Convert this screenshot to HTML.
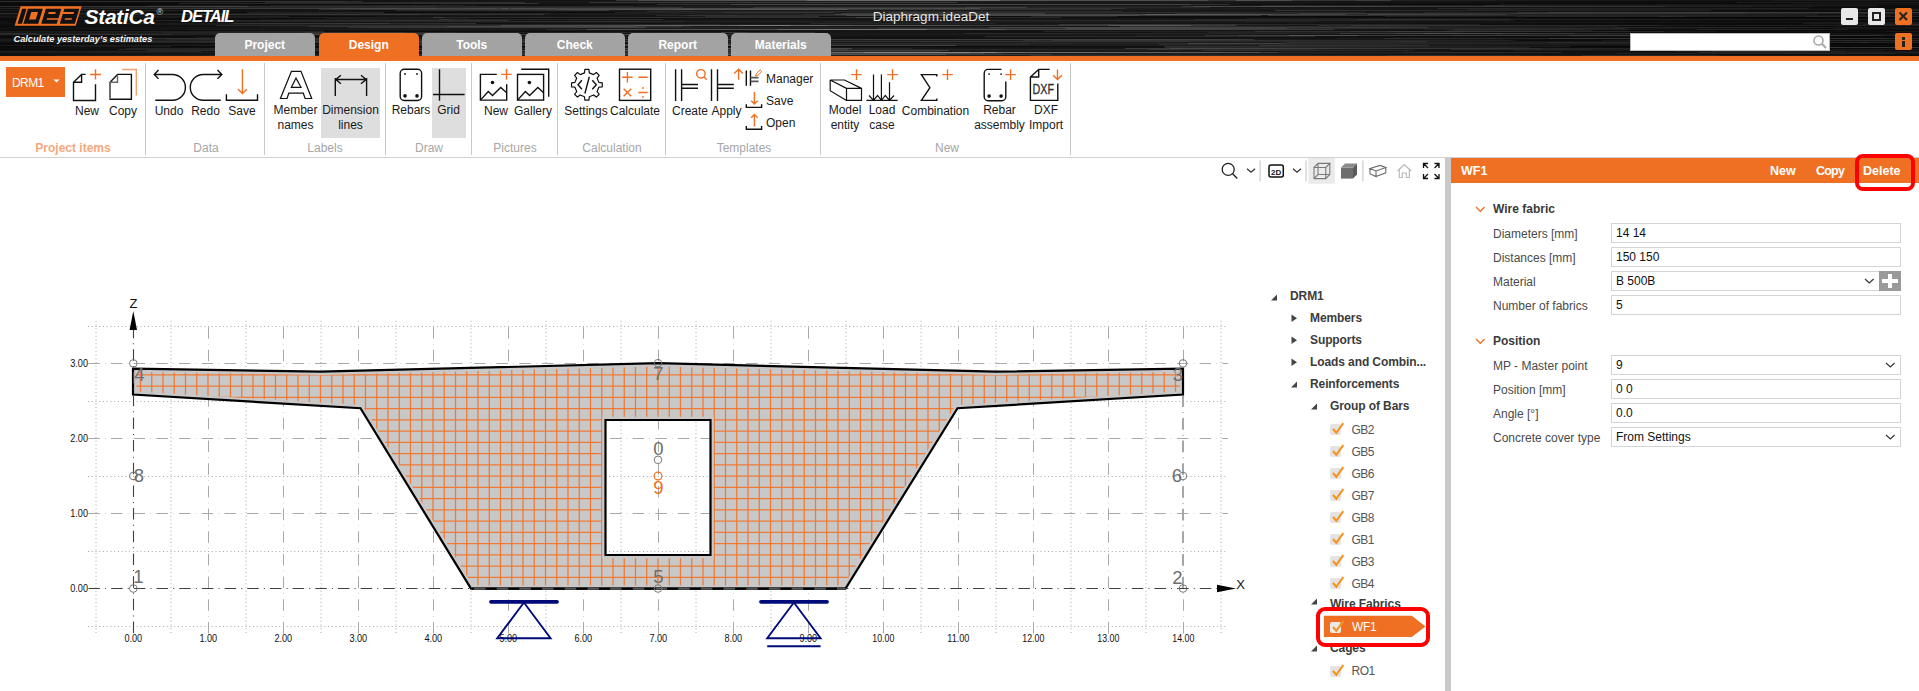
<!DOCTYPE html><html><head><meta charset="utf-8"><style>
*{margin:0;padding:0;box-sizing:border-box}
html,body{width:1919px;height:691px;overflow:hidden;background:#fff;font-family:"Liberation Sans", sans-serif;position:relative}
.a{position:absolute}
.t{position:absolute;white-space:nowrap;line-height:1;font-size:12px;color:#1a1a1a}
.c{transform:translateX(-50%)}
.gl{position:absolute;white-space:nowrap;line-height:1;font-size:12px;color:#a6a6a6;transform:translateX(-50%)}
.sep{position:absolute;top:63px;width:1px;height:92px;background:#c9c9c9}
.tab{position:absolute;top:33px;height:23px;width:99.5px;background:#a3a3a3;border-radius:5px 5px 0 0;color:#fff;font-weight:bold;font-size:12px;text-align:center;line-height:24px}
.lbl{position:absolute;left:1493px;font-size:12px;color:#4a4a4a;white-space:nowrap;line-height:1}
.inp{position:absolute;left:1611px;width:290px;height:19.5px;border:1px solid #d4d4d4;background:#fff;font-size:12px;color:#111;padding-left:4px;line-height:18px;white-space:nowrap}
.tr{position:absolute;font-size:12px;letter-spacing:-0.1px;font-weight:bold;color:#3c3c3c;white-space:nowrap;line-height:1}
.gb{position:absolute;margin-left:-0.5px;letter-spacing:-0.5px;font-size:12px;color:#555;white-space:nowrap;line-height:1}
</style></head><body>
<div class="a" style="left:0;top:0;width:1919px;height:56px;background:linear-gradient(to bottom,rgb(24,24,24) 0px, rgb(24,24,24) 1px,rgb(29,29,29) 1px, rgb(29,29,29) 2px,rgb(24,24,24) 2px, rgb(24,24,24) 3px,rgb(24,24,24) 3px, rgb(24,24,24) 4px,rgb(20,20,20) 4px, rgb(20,20,20) 5px,rgb(24,24,24) 5px, rgb(24,24,24) 6px,rgb(32,32,32) 6px, rgb(32,32,32) 7px,rgb(28,28,28) 7px, rgb(28,28,28) 8px,rgb(32,32,32) 8px, rgb(32,32,32) 9px,rgb(27,27,27) 9px, rgb(27,27,27) 10px,rgb(28,28,28) 10px, rgb(28,28,28) 11px,rgb(27,27,27) 11px, rgb(27,27,27) 12px,rgb(16,16,16) 12px, rgb(16,16,16) 13px,rgb(31,31,31) 13px, rgb(31,31,31) 14px,rgb(29,29,29) 14px, rgb(29,29,29) 15px,rgb(28,28,28) 15px, rgb(28,28,28) 16px,rgb(15,15,15) 16px, rgb(15,15,15) 17px,rgb(15,15,15) 17px, rgb(15,15,15) 18px,rgb(20,20,20) 18px, rgb(20,20,20) 19px,rgb(23,23,23) 19px, rgb(23,23,23) 20px,rgb(27,27,27) 20px, rgb(27,27,27) 21px,rgb(25,25,25) 21px, rgb(25,25,25) 22px,rgb(29,29,29) 22px, rgb(29,29,29) 23px,rgb(22,22,22) 23px, rgb(22,22,22) 24px,rgb(27,27,27) 24px, rgb(27,27,27) 25px,rgb(28,28,28) 25px, rgb(28,28,28) 26px,rgb(22,22,22) 26px, rgb(22,22,22) 27px,rgb(36,36,36) 27px, rgb(36,36,36) 28px,rgb(29,29,29) 28px, rgb(29,29,29) 29px,rgb(33,33,33) 29px, rgb(33,33,33) 30px,rgb(22,22,22) 30px, rgb(22,22,22) 31px,rgb(21,21,21) 31px, rgb(21,21,21) 32px,rgb(23,23,23) 32px, rgb(23,23,23) 33px,rgb(25,25,25) 33px, rgb(25,25,25) 34px,rgb(29,29,29) 34px, rgb(29,29,29) 35px,rgb(27,27,27) 35px, rgb(27,27,27) 36px,rgb(23,23,23) 36px, rgb(23,23,23) 37px,rgb(20,20,20) 37px, rgb(20,20,20) 38px,rgb(22,22,22) 38px, rgb(22,22,22) 39px,rgb(33,33,33) 39px, rgb(33,33,33) 40px,rgb(21,21,21) 40px, rgb(21,21,21) 41px,rgb(27,27,27) 41px, rgb(27,27,27) 42px,rgb(28,28,28) 42px, rgb(28,28,28) 43px,rgb(17,17,17) 43px, rgb(17,17,17) 44px,rgb(26,26,26) 44px, rgb(26,26,26) 45px,rgb(33,33,33) 45px, rgb(33,33,33) 46px,rgb(13,13,13) 46px, rgb(13,13,13) 47px,rgb(24,24,24) 47px, rgb(24,24,24) 48px,rgb(25,25,25) 48px, rgb(25,25,25) 49px,rgb(21,21,21) 49px, rgb(21,21,21) 50px,rgb(28,28,28) 50px, rgb(28,28,28) 51px,rgb(25,25,25) 51px, rgb(25,25,25) 52px,rgb(17,17,17) 52px, rgb(17,17,17) 53px,rgb(30,30,30) 53px, rgb(30,30,30) 54px,rgb(30,30,30) 54px, rgb(30,30,30) 55px,rgb(31,31,31) 55px, rgb(31,31,31) 56px)"></div>
<svg class="a" style="left:0;top:0" width="1919" height="56"><rect x="1820" y="2" width="128" height="1" fill="rgb(0,0,0)" fill-opacity="0.11"/><rect x="459" y="52" width="511" height="1" fill="rgb(255,255,255)" fill-opacity="0.11"/><rect x="-56" y="29" width="138" height="1" fill="rgb(0,0,0)" fill-opacity="0.07"/><rect x="-73" y="4" width="515" height="1" fill="rgb(0,0,0)" fill-opacity="0.12"/><rect x="736" y="52" width="524" height="1" fill="rgb(255,255,255)" fill-opacity="0.15"/><rect x="546" y="29" width="459" height="1" fill="rgb(255,255,255)" fill-opacity="0.10"/><rect x="72" y="18" width="234" height="1" fill="rgb(0,0,0)" fill-opacity="0.09"/><rect x="149" y="5" width="329" height="1" fill="rgb(255,255,255)" fill-opacity="0.07"/><rect x="1614" y="27" width="253" height="1" fill="rgb(255,255,255)" fill-opacity="0.09"/><rect x="1811" y="24" width="174" height="1" fill="rgb(255,255,255)" fill-opacity="0.06"/><rect x="-175" y="14" width="595" height="1" fill="rgb(255,255,255)" fill-opacity="0.06"/><rect x="680" y="9" width="309" height="1" fill="rgb(0,0,0)" fill-opacity="0.11"/><rect x="1604" y="44" width="669" height="1" fill="rgb(0,0,0)" fill-opacity="0.12"/><rect x="1689" y="29" width="564" height="1" fill="rgb(0,0,0)" fill-opacity="0.14"/><rect x="636" y="25" width="324" height="1" fill="rgb(255,255,255)" fill-opacity="0.10"/><rect x="-59" y="12" width="209" height="1" fill="rgb(255,255,255)" fill-opacity="0.06"/><rect x="15" y="3" width="431" height="1" fill="rgb(0,0,0)" fill-opacity="0.10"/><rect x="-146" y="39" width="622" height="1" fill="rgb(255,255,255)" fill-opacity="0.11"/><rect x="1806" y="16" width="453" height="1" fill="rgb(255,255,255)" fill-opacity="0.10"/><rect x="1886" y="31" width="369" height="1" fill="rgb(255,255,255)" fill-opacity="0.10"/><rect x="1374" y="6" width="539" height="1" fill="rgb(0,0,0)" fill-opacity="0.10"/><rect x="-151" y="33" width="670" height="1" fill="rgb(255,255,255)" fill-opacity="0.10"/><rect x="1720" y="34" width="550" height="1" fill="rgb(0,0,0)" fill-opacity="0.08"/><rect x="1262" y="5" width="242" height="1" fill="rgb(255,255,255)" fill-opacity="0.08"/><rect x="268" y="49" width="416" height="1" fill="rgb(0,0,0)" fill-opacity="0.10"/><rect x="1504" y="39" width="691" height="1" fill="rgb(0,0,0)" fill-opacity="0.14"/><rect x="641" y="52" width="578" height="1" fill="rgb(255,255,255)" fill-opacity="0.06"/><rect x="-139" y="46" width="97" height="1" fill="rgb(255,255,255)" fill-opacity="0.07"/><rect x="1071" y="44" width="293" height="1" fill="rgb(0,0,0)" fill-opacity="0.14"/><rect x="1806" y="22" width="306" height="1" fill="rgb(255,255,255)" fill-opacity="0.07"/><rect x="509" y="12" width="379" height="1" fill="rgb(0,0,0)" fill-opacity="0.16"/><rect x="807" y="0" width="485" height="1" fill="rgb(255,255,255)" fill-opacity="0.14"/><rect x="52" y="42" width="321" height="1" fill="rgb(255,255,255)" fill-opacity="0.13"/><rect x="711" y="11" width="474" height="1" fill="rgb(0,0,0)" fill-opacity="0.05"/><rect x="631" y="46" width="329" height="1" fill="rgb(0,0,0)" fill-opacity="0.15"/><rect x="1886" y="10" width="97" height="1" fill="rgb(255,255,255)" fill-opacity="0.11"/><rect x="107" y="41" width="592" height="1" fill="rgb(0,0,0)" fill-opacity="0.16"/><rect x="127" y="22" width="420" height="1" fill="rgb(0,0,0)" fill-opacity="0.04"/><rect x="1164" y="46" width="406" height="1" fill="rgb(255,255,255)" fill-opacity="0.15"/><rect x="209" y="55" width="622" height="1" fill="rgb(255,255,255)" fill-opacity="0.04"/><rect x="305" y="32" width="444" height="1" fill="rgb(255,255,255)" fill-opacity="0.07"/><rect x="-72" y="8" width="539" height="1" fill="rgb(0,0,0)" fill-opacity="0.15"/><rect x="1699" y="52" width="341" height="1" fill="rgb(255,255,255)" fill-opacity="0.15"/><rect x="119" y="34" width="397" height="1" fill="rgb(0,0,0)" fill-opacity="0.14"/><rect x="-192" y="38" width="575" height="1" fill="rgb(255,255,255)" fill-opacity="0.06"/><rect x="53" y="46" width="118" height="1" fill="rgb(255,255,255)" fill-opacity="0.12"/><rect x="1447" y="30" width="146" height="1" fill="rgb(255,255,255)" fill-opacity="0.11"/><rect x="-111" y="17" width="141" height="1" fill="rgb(255,255,255)" fill-opacity="0.09"/><rect x="731" y="4" width="460" height="1" fill="rgb(255,255,255)" fill-opacity="0.10"/><rect x="382" y="44" width="395" height="1" fill="rgb(255,255,255)" fill-opacity="0.14"/><rect x="1268" y="15" width="623" height="1" fill="rgb(255,255,255)" fill-opacity="0.15"/><rect x="1675" y="35" width="206" height="1" fill="rgb(255,255,255)" fill-opacity="0.09"/><rect x="728" y="25" width="125" height="1" fill="rgb(255,255,255)" fill-opacity="0.07"/><rect x="436" y="42" width="156" height="1" fill="rgb(0,0,0)" fill-opacity="0.13"/><rect x="1187" y="41" width="169" height="1" fill="rgb(0,0,0)" fill-opacity="0.15"/><rect x="1368" y="14" width="138" height="1" fill="rgb(255,255,255)" fill-opacity="0.15"/><rect x="1548" y="42" width="180" height="1" fill="rgb(255,255,255)" fill-opacity="0.09"/><rect x="685" y="21" width="301" height="1" fill="rgb(255,255,255)" fill-opacity="0.05"/><rect x="964" y="21" width="353" height="1" fill="rgb(255,255,255)" fill-opacity="0.04"/><rect x="420" y="39" width="676" height="1" fill="rgb(0,0,0)" fill-opacity="0.05"/><rect x="1841" y="14" width="145" height="1" fill="rgb(255,255,255)" fill-opacity="0.07"/><rect x="181" y="49" width="549" height="1" fill="rgb(0,0,0)" fill-opacity="0.14"/><rect x="1520" y="43" width="240" height="1" fill="rgb(0,0,0)" fill-opacity="0.06"/><rect x="839" y="36" width="283" height="1" fill="rgb(0,0,0)" fill-opacity="0.07"/><rect x="693" y="11" width="125" height="1" fill="rgb(0,0,0)" fill-opacity="0.15"/><rect x="347" y="51" width="457" height="1" fill="rgb(255,255,255)" fill-opacity="0.07"/><rect x="753" y="7" width="290" height="1" fill="rgb(0,0,0)" fill-opacity="0.11"/><rect x="1106" y="17" width="107" height="1" fill="rgb(0,0,0)" fill-opacity="0.13"/><rect x="350" y="10" width="192" height="1" fill="rgb(0,0,0)" fill-opacity="0.15"/><rect x="1395" y="33" width="260" height="1" fill="rgb(255,255,255)" fill-opacity="0.10"/><rect x="1488" y="22" width="697" height="1" fill="rgb(255,255,255)" fill-opacity="0.04"/><rect x="957" y="32" width="197" height="1" fill="rgb(0,0,0)" fill-opacity="0.10"/><rect x="1182" y="6" width="483" height="1" fill="rgb(255,255,255)" fill-opacity="0.12"/><rect x="1838" y="25" width="271" height="1" fill="rgb(255,255,255)" fill-opacity="0.07"/><rect x="1548" y="12" width="518" height="1" fill="rgb(255,255,255)" fill-opacity="0.12"/><rect x="1862" y="22" width="599" height="1" fill="rgb(0,0,0)" fill-opacity="0.04"/><rect x="705" y="16" width="114" height="1" fill="rgb(255,255,255)" fill-opacity="0.12"/><rect x="1208" y="32" width="255" height="1" fill="rgb(255,255,255)" fill-opacity="0.07"/><rect x="189" y="29" width="247" height="1" fill="rgb(255,255,255)" fill-opacity="0.04"/><rect x="1843" y="21" width="419" height="1" fill="rgb(0,0,0)" fill-opacity="0.07"/><rect x="258" y="19" width="193" height="1" fill="rgb(255,255,255)" fill-opacity="0.08"/><rect x="856" y="17" width="205" height="1" fill="rgb(255,255,255)" fill-opacity="0.10"/><rect x="1516" y="16" width="169" height="1" fill="rgb(255,255,255)" fill-opacity="0.11"/><rect x="439" y="19" width="224" height="1" fill="rgb(255,255,255)" fill-opacity="0.11"/><rect x="126" y="48" width="634" height="1" fill="rgb(255,255,255)" fill-opacity="0.13"/><rect x="485" y="48" width="691" height="1" fill="rgb(0,0,0)" fill-opacity="0.06"/><rect x="104" y="41" width="591" height="1" fill="rgb(255,255,255)" fill-opacity="0.13"/><rect x="1341" y="27" width="584" height="1" fill="rgb(255,255,255)" fill-opacity="0.06"/><rect x="994" y="32" width="584" height="1" fill="rgb(0,0,0)" fill-opacity="0.04"/><rect x="1675" y="51" width="503" height="1" fill="rgb(255,255,255)" fill-opacity="0.12"/><rect x="-112" y="1" width="475" height="1" fill="rgb(255,255,255)" fill-opacity="0.16"/><rect x="973" y="28" width="469" height="1" fill="rgb(0,0,0)" fill-opacity="0.12"/><rect x="354" y="31" width="363" height="1" fill="rgb(0,0,0)" fill-opacity="0.05"/><rect x="-7" y="34" width="406" height="1" fill="rgb(255,255,255)" fill-opacity="0.13"/><rect x="-44" y="51" width="245" height="1" fill="rgb(255,255,255)" fill-opacity="0.13"/><rect x="1165" y="47" width="365" height="1" fill="rgb(255,255,255)" fill-opacity="0.14"/><rect x="403" y="43" width="109" height="1" fill="rgb(255,255,255)" fill-opacity="0.12"/><rect x="110" y="38" width="237" height="1" fill="rgb(255,255,255)" fill-opacity="0.13"/><rect x="80" y="36" width="379" height="1" fill="rgb(0,0,0)" fill-opacity="0.10"/><rect x="1254" y="6" width="499" height="1" fill="rgb(255,255,255)" fill-opacity="0.07"/><rect x="778" y="29" width="556" height="1" fill="rgb(255,255,255)" fill-opacity="0.16"/><rect x="1854" y="19" width="660" height="1" fill="rgb(255,255,255)" fill-opacity="0.04"/><rect x="864" y="52" width="697" height="1" fill="rgb(255,255,255)" fill-opacity="0.16"/><rect x="-43" y="13" width="136" height="1" fill="rgb(255,255,255)" fill-opacity="0.13"/><rect x="78" y="23" width="589" height="1" fill="rgb(0,0,0)" fill-opacity="0.10"/><rect x="567" y="45" width="389" height="1" fill="rgb(255,255,255)" fill-opacity="0.15"/><rect x="-192" y="10" width="385" height="1" fill="rgb(255,255,255)" fill-opacity="0.09"/><rect x="674" y="9" width="313" height="1" fill="rgb(255,255,255)" fill-opacity="0.05"/><rect x="1377" y="20" width="600" height="1" fill="rgb(0,0,0)" fill-opacity="0.05"/><rect x="-175" y="45" width="539" height="1" fill="rgb(255,255,255)" fill-opacity="0.07"/><rect x="1897" y="24" width="445" height="1" fill="rgb(255,255,255)" fill-opacity="0.08"/><rect x="1594" y="17" width="254" height="1" fill="rgb(0,0,0)" fill-opacity="0.05"/><rect x="1765" y="40" width="235" height="1" fill="rgb(255,255,255)" fill-opacity="0.07"/><rect x="1424" y="12" width="567" height="1" fill="rgb(255,255,255)" fill-opacity="0.09"/><rect x="1125" y="48" width="646" height="1" fill="rgb(255,255,255)" fill-opacity="0.15"/><rect x="-31" y="46" width="659" height="1" fill="rgb(0,0,0)" fill-opacity="0.09"/><rect x="1153" y="8" width="257" height="1" fill="rgb(0,0,0)" fill-opacity="0.05"/><rect x="159" y="8" width="337" height="1" fill="rgb(255,255,255)" fill-opacity="0.07"/><rect x="1850" y="47" width="241" height="1" fill="rgb(255,255,255)" fill-opacity="0.12"/><rect x="1205" y="35" width="154" height="1" fill="rgb(255,255,255)" fill-opacity="0.12"/><rect x="1703" y="32" width="388" height="1" fill="rgb(0,0,0)" fill-opacity="0.07"/><rect x="745" y="48" width="167" height="1" fill="rgb(255,255,255)" fill-opacity="0.06"/><rect x="967" y="21" width="278" height="1" fill="rgb(0,0,0)" fill-opacity="0.08"/><rect x="1663" y="12" width="545" height="1" fill="rgb(255,255,255)" fill-opacity="0.09"/><rect x="241" y="33" width="248" height="1" fill="rgb(255,255,255)" fill-opacity="0.13"/><rect x="1832" y="36" width="158" height="1" fill="rgb(0,0,0)" fill-opacity="0.10"/><rect x="1582" y="55" width="137" height="1" fill="rgb(255,255,255)" fill-opacity="0.15"/><rect x="736" y="41" width="671" height="1" fill="rgb(0,0,0)" fill-opacity="0.14"/><rect x="67" y="1" width="344" height="1" fill="rgb(0,0,0)" fill-opacity="0.13"/><rect x="829" y="37" width="125" height="1" fill="rgb(0,0,0)" fill-opacity="0.15"/><rect x="1596" y="33" width="683" height="1" fill="rgb(255,255,255)" fill-opacity="0.07"/><rect x="119" y="9" width="683" height="1" fill="rgb(0,0,0)" fill-opacity="0.05"/><rect x="1159" y="44" width="554" height="1" fill="rgb(255,255,255)" fill-opacity="0.09"/><rect x="-197" y="2" width="158" height="1" fill="rgb(255,255,255)" fill-opacity="0.11"/><rect x="438" y="45" width="159" height="1" fill="rgb(0,0,0)" fill-opacity="0.07"/><rect x="1404" y="44" width="142" height="1" fill="rgb(0,0,0)" fill-opacity="0.08"/><rect x="615" y="12" width="219" height="1" fill="rgb(255,255,255)" fill-opacity="0.11"/><rect x="1892" y="19" width="253" height="1" fill="rgb(0,0,0)" fill-opacity="0.08"/><rect x="798" y="15" width="226" height="1" fill="rgb(0,0,0)" fill-opacity="0.07"/><rect x="1164" y="45" width="114" height="1" fill="rgb(0,0,0)" fill-opacity="0.06"/><rect x="682" y="41" width="239" height="1" fill="rgb(0,0,0)" fill-opacity="0.12"/><rect x="835" y="14" width="511" height="1" fill="rgb(255,255,255)" fill-opacity="0.13"/><rect x="216" y="25" width="574" height="1" fill="rgb(255,255,255)" fill-opacity="0.13"/><rect x="841" y="13" width="204" height="1" fill="rgb(255,255,255)" fill-opacity="0.13"/><rect x="265" y="29" width="551" height="1" fill="rgb(0,0,0)" fill-opacity="0.08"/><rect x="1081" y="31" width="636" height="1" fill="rgb(0,0,0)" fill-opacity="0.10"/><rect x="1792" y="3" width="171" height="1" fill="rgb(255,255,255)" fill-opacity="0.09"/><rect x="98" y="38" width="112" height="1" fill="rgb(255,255,255)" fill-opacity="0.05"/><rect x="1656" y="45" width="534" height="1" fill="rgb(0,0,0)" fill-opacity="0.16"/><rect x="200" y="21" width="485" height="1" fill="rgb(255,255,255)" fill-opacity="0.10"/><rect x="1195" y="19" width="315" height="1" fill="rgb(255,255,255)" fill-opacity="0.08"/><rect x="29" y="10" width="129" height="1" fill="rgb(255,255,255)" fill-opacity="0.05"/><rect x="978" y="7" width="550" height="1" fill="rgb(0,0,0)" fill-opacity="0.09"/><rect x="1526" y="19" width="348" height="1" fill="rgb(255,255,255)" fill-opacity="0.05"/><rect x="937" y="23" width="357" height="1" fill="rgb(0,0,0)" fill-opacity="0.08"/><rect x="-136" y="30" width="335" height="1" fill="rgb(0,0,0)" fill-opacity="0.14"/><rect x="589" y="2" width="368" height="1" fill="rgb(255,255,255)" fill-opacity="0.14"/><rect x="1369" y="12" width="637" height="1" fill="rgb(255,255,255)" fill-opacity="0.08"/><rect x="-108" y="39" width="543" height="1" fill="rgb(0,0,0)" fill-opacity="0.12"/><rect x="-192" y="19" width="549" height="1" fill="rgb(0,0,0)" fill-opacity="0.15"/><rect x="-149" y="4" width="225" height="1" fill="rgb(0,0,0)" fill-opacity="0.10"/><rect x="612" y="49" width="236" height="1" fill="rgb(255,255,255)" fill-opacity="0.09"/><rect x="184" y="31" width="578" height="1" fill="rgb(0,0,0)" fill-opacity="0.13"/><rect x="118" y="49" width="226" height="1" fill="rgb(255,255,255)" fill-opacity="0.14"/><rect x="1443" y="50" width="129" height="1" fill="rgb(0,0,0)" fill-opacity="0.06"/><rect x="656" y="15" width="483" height="1" fill="rgb(255,255,255)" fill-opacity="0.10"/><rect x="1859" y="10" width="628" height="1" fill="rgb(255,255,255)" fill-opacity="0.16"/><rect x="238" y="5" width="341" height="1" fill="rgb(0,0,0)" fill-opacity="0.16"/><rect x="292" y="11" width="338" height="1" fill="rgb(0,0,0)" fill-opacity="0.11"/><rect x="931" y="47" width="560" height="1" fill="rgb(0,0,0)" fill-opacity="0.13"/><rect x="417" y="18" width="431" height="1" fill="rgb(0,0,0)" fill-opacity="0.08"/><rect x="723" y="12" width="195" height="1" fill="rgb(255,255,255)" fill-opacity="0.07"/><rect x="195" y="37" width="120" height="1" fill="rgb(255,255,255)" fill-opacity="0.07"/><rect x="286" y="33" width="581" height="1" fill="rgb(0,0,0)" fill-opacity="0.12"/><rect x="-191" y="6" width="627" height="1" fill="rgb(255,255,255)" fill-opacity="0.07"/><rect x="-115" y="23" width="262" height="1" fill="rgb(255,255,255)" fill-opacity="0.05"/><rect x="1025" y="52" width="657" height="1" fill="rgb(0,0,0)" fill-opacity="0.08"/><rect x="1066" y="28" width="560" height="1" fill="rgb(255,255,255)" fill-opacity="0.12"/><rect x="1052" y="40" width="464" height="1" fill="rgb(255,255,255)" fill-opacity="0.07"/><rect x="-107" y="9" width="700" height="1" fill="rgb(0,0,0)" fill-opacity="0.04"/><rect x="1511" y="13" width="588" height="1" fill="rgb(255,255,255)" fill-opacity="0.09"/><rect x="456" y="39" width="206" height="1" fill="rgb(255,255,255)" fill-opacity="0.14"/><rect x="657" y="4" width="573" height="1" fill="rgb(255,255,255)" fill-opacity="0.12"/><rect x="-9" y="34" width="181" height="1" fill="rgb(255,255,255)" fill-opacity="0.12"/><rect x="1202" y="18" width="339" height="1" fill="rgb(0,0,0)" fill-opacity="0.05"/><rect x="670" y="22" width="91" height="1" fill="rgb(0,0,0)" fill-opacity="0.13"/><rect x="214" y="41" width="531" height="1" fill="rgb(255,255,255)" fill-opacity="0.06"/><rect x="690" y="10" width="589" height="1" fill="rgb(0,0,0)" fill-opacity="0.09"/><rect x="1423" y="29" width="161" height="1" fill="rgb(255,255,255)" fill-opacity="0.05"/><rect x="1711" y="51" width="135" height="1" fill="rgb(255,255,255)" fill-opacity="0.11"/><rect x="161" y="32" width="296" height="1" fill="rgb(255,255,255)" fill-opacity="0.06"/><rect x="28" y="4" width="384" height="1" fill="rgb(0,0,0)" fill-opacity="0.14"/><rect x="433" y="12" width="599" height="1" fill="rgb(0,0,0)" fill-opacity="0.05"/><rect x="-88" y="20" width="654" height="1" fill="rgb(0,0,0)" fill-opacity="0.09"/><rect x="1245" y="39" width="633" height="1" fill="rgb(0,0,0)" fill-opacity="0.12"/><rect x="649" y="39" width="605" height="1" fill="rgb(255,255,255)" fill-opacity="0.14"/><rect x="-112" y="13" width="662" height="1" fill="rgb(255,255,255)" fill-opacity="0.06"/><rect x="319" y="9" width="529" height="1" fill="rgb(255,255,255)" fill-opacity="0.15"/><rect x="1569" y="35" width="497" height="1" fill="rgb(255,255,255)" fill-opacity="0.12"/><rect x="1059" y="24" width="421" height="1" fill="rgb(255,255,255)" fill-opacity="0.12"/><rect x="447" y="26" width="235" height="1" fill="rgb(255,255,255)" fill-opacity="0.09"/><rect x="721" y="32" width="94" height="1" fill="rgb(255,255,255)" fill-opacity="0.11"/><rect x="738" y="15" width="464" height="1" fill="rgb(0,0,0)" fill-opacity="0.14"/><rect x="794" y="51" width="146" height="1" fill="rgb(255,255,255)" fill-opacity="0.06"/><rect x="1485" y="5" width="393" height="1" fill="rgb(255,255,255)" fill-opacity="0.12"/><rect x="-27" y="8" width="535" height="1" fill="rgb(255,255,255)" fill-opacity="0.13"/><rect x="1379" y="3" width="635" height="1" fill="rgb(0,0,0)" fill-opacity="0.12"/><rect x="1600" y="1" width="698" height="1" fill="rgb(0,0,0)" fill-opacity="0.13"/><rect x="76" y="12" width="629" height="1" fill="rgb(0,0,0)" fill-opacity="0.07"/><rect x="147" y="50" width="569" height="1" fill="rgb(255,255,255)" fill-opacity="0.15"/><rect x="1082" y="22" width="236" height="1" fill="rgb(0,0,0)" fill-opacity="0.08"/><rect x="758" y="52" width="238" height="1" fill="rgb(255,255,255)" fill-opacity="0.16"/><rect x="352" y="37" width="394" height="1" fill="rgb(255,255,255)" fill-opacity="0.08"/><rect x="647" y="11" width="475" height="1" fill="rgb(255,255,255)" fill-opacity="0.07"/><rect x="154" y="24" width="567" height="1" fill="rgb(255,255,255)" fill-opacity="0.05"/><rect x="1602" y="40" width="679" height="1" fill="rgb(255,255,255)" fill-opacity="0.09"/><rect x="1653" y="44" width="145" height="1" fill="rgb(0,0,0)" fill-opacity="0.16"/><rect x="1350" y="25" width="310" height="1" fill="rgb(255,255,255)" fill-opacity="0.09"/><rect x="557" y="9" width="554" height="1" fill="rgb(255,255,255)" fill-opacity="0.09"/><rect x="1812" y="47" width="264" height="1" fill="rgb(255,255,255)" fill-opacity="0.10"/><rect x="1030" y="55" width="491" height="1" fill="rgb(255,255,255)" fill-opacity="0.08"/><rect x="265" y="2" width="260" height="1" fill="rgb(255,255,255)" fill-opacity="0.12"/><rect x="1681" y="23" width="162" height="1" fill="rgb(0,0,0)" fill-opacity="0.07"/><rect x="-86" y="1" width="432" height="1" fill="rgb(255,255,255)" fill-opacity="0.08"/><rect x="271" y="34" width="442" height="1" fill="rgb(255,255,255)" fill-opacity="0.11"/><rect x="1540" y="39" width="178" height="1" fill="rgb(0,0,0)" fill-opacity="0.04"/><rect x="114" y="45" width="139" height="1" fill="rgb(0,0,0)" fill-opacity="0.12"/><rect x="366" y="50" width="583" height="1" fill="rgb(255,255,255)" fill-opacity="0.16"/><rect x="981" y="52" width="297" height="1" fill="rgb(255,255,255)" fill-opacity="0.12"/><rect x="1340" y="33" width="234" height="1" fill="rgb(255,255,255)" fill-opacity="0.15"/><rect x="-147" y="34" width="195" height="1" fill="rgb(0,0,0)" fill-opacity="0.06"/><rect x="-174" y="6" width="422" height="1" fill="rgb(255,255,255)" fill-opacity="0.15"/><rect x="888" y="12" width="478" height="1" fill="rgb(255,255,255)" fill-opacity="0.12"/><rect x="167" y="39" width="272" height="1" fill="rgb(255,255,255)" fill-opacity="0.08"/><rect x="1444" y="46" width="524" height="1" fill="rgb(0,0,0)" fill-opacity="0.04"/><rect x="1716" y="47" width="130" height="1" fill="rgb(255,255,255)" fill-opacity="0.12"/><rect x="349" y="6" width="479" height="1" fill="rgb(0,0,0)" fill-opacity="0.05"/><rect x="1780" y="44" width="243" height="1" fill="rgb(0,0,0)" fill-opacity="0.05"/><rect x="716" y="43" width="569" height="1" fill="rgb(255,255,255)" fill-opacity="0.10"/><rect x="1750" y="41" width="634" height="1" fill="rgb(255,255,255)" fill-opacity="0.05"/><rect x="347" y="10" width="226" height="1" fill="rgb(0,0,0)" fill-opacity="0.13"/><rect x="1721" y="47" width="199" height="1" fill="rgb(0,0,0)" fill-opacity="0.09"/><rect x="1706" y="24" width="471" height="1" fill="rgb(0,0,0)" fill-opacity="0.12"/><rect x="786" y="34" width="601" height="1" fill="rgb(0,0,0)" fill-opacity="0.12"/><rect x="1807" y="27" width="225" height="1" fill="rgb(0,0,0)" fill-opacity="0.15"/><rect x="1108" y="25" width="128" height="1" fill="rgb(255,255,255)" fill-opacity="0.15"/><rect x="35" y="1" width="466" height="1" fill="rgb(0,0,0)" fill-opacity="0.06"/><rect x="-140" y="44" width="106" height="1" fill="rgb(0,0,0)" fill-opacity="0.12"/><rect x="-58" y="44" width="109" height="1" fill="rgb(0,0,0)" fill-opacity="0.14"/><rect x="1517" y="12" width="588" height="1" fill="rgb(255,255,255)" fill-opacity="0.15"/><rect x="1387" y="55" width="521" height="1" fill="rgb(255,255,255)" fill-opacity="0.09"/><rect x="35" y="13" width="101" height="1" fill="rgb(0,0,0)" fill-opacity="0.14"/><rect x="-16" y="40" width="546" height="1" fill="rgb(255,255,255)" fill-opacity="0.12"/><rect x="6" y="8" width="550" height="1" fill="rgb(255,255,255)" fill-opacity="0.06"/><rect x="348" y="27" width="298" height="1" fill="rgb(255,255,255)" fill-opacity="0.15"/><rect x="573" y="48" width="279" height="1" fill="rgb(255,255,255)" fill-opacity="0.16"/><rect x="404" y="54" width="542" height="1" fill="rgb(255,255,255)" fill-opacity="0.13"/><rect x="1423" y="33" width="295" height="1" fill="rgb(255,255,255)" fill-opacity="0.12"/><rect x="1300" y="13" width="593" height="1" fill="rgb(255,255,255)" fill-opacity="0.11"/><rect x="-197" y="27" width="205" height="1" fill="rgb(0,0,0)" fill-opacity="0.13"/><rect x="530" y="0" width="139" height="1" fill="rgb(0,0,0)" fill-opacity="0.12"/><rect x="1044" y="31" width="673" height="1" fill="rgb(255,255,255)" fill-opacity="0.10"/><rect x="396" y="10" width="213" height="1" fill="rgb(255,255,255)" fill-opacity="0.12"/><rect x="1771" y="7" width="555" height="1" fill="rgb(0,0,0)" fill-opacity="0.10"/><rect x="1453" y="35" width="469" height="1" fill="rgb(255,255,255)" fill-opacity="0.08"/><rect x="1673" y="25" width="542" height="1" fill="rgb(0,0,0)" fill-opacity="0.09"/><rect x="233" y="23" width="243" height="1" fill="rgb(255,255,255)" fill-opacity="0.15"/><rect x="1863" y="24" width="471" height="1" fill="rgb(255,255,255)" fill-opacity="0.15"/><rect x="1384" y="38" width="547" height="1" fill="rgb(255,255,255)" fill-opacity="0.12"/><rect x="896" y="20" width="618" height="1" fill="rgb(255,255,255)" fill-opacity="0.09"/><rect x="156" y="20" width="352" height="1" fill="rgb(255,255,255)" fill-opacity="0.13"/><rect x="502" y="8" width="478" height="1" fill="rgb(255,255,255)" fill-opacity="0.12"/><rect x="433" y="17" width="516" height="1" fill="rgb(255,255,255)" fill-opacity="0.14"/><rect x="1847" y="9" width="528" height="1" fill="rgb(255,255,255)" fill-opacity="0.11"/><rect x="489" y="15" width="197" height="1" fill="rgb(0,0,0)" fill-opacity="0.16"/><rect x="146" y="6" width="488" height="1" fill="rgb(255,255,255)" fill-opacity="0.06"/><rect x="1469" y="9" width="535" height="1" fill="rgb(255,255,255)" fill-opacity="0.09"/><rect x="1714" y="40" width="254" height="1" fill="rgb(255,255,255)" fill-opacity="0.15"/><rect x="638" y="0" width="570" height="1" fill="rgb(255,255,255)" fill-opacity="0.12"/><rect x="422" y="40" width="94" height="1" fill="rgb(0,0,0)" fill-opacity="0.07"/><rect x="1356" y="0" width="643" height="1" fill="rgb(255,255,255)" fill-opacity="0.09"/><rect x="1159" y="47" width="605" height="1" fill="rgb(0,0,0)" fill-opacity="0.12"/><rect x="1148" y="49" width="442" height="1" fill="rgb(255,255,255)" fill-opacity="0.07"/><rect x="753" y="7" width="274" height="1" fill="rgb(255,255,255)" fill-opacity="0.12"/><rect x="309" y="26" width="328" height="1" fill="rgb(255,255,255)" fill-opacity="0.13"/><rect x="690" y="54" width="362" height="1" fill="rgb(255,255,255)" fill-opacity="0.11"/><rect x="1188" y="43" width="621" height="1" fill="rgb(255,255,255)" fill-opacity="0.15"/><rect x="616" y="0" width="384" height="1" fill="rgb(255,255,255)" fill-opacity="0.16"/><rect x="258" y="34" width="524" height="1" fill="rgb(255,255,255)" fill-opacity="0.15"/><rect x="12" y="22" width="436" height="1" fill="rgb(0,0,0)" fill-opacity="0.10"/><rect x="-166" y="32" width="571" height="1" fill="rgb(255,255,255)" fill-opacity="0.08"/><rect x="1791" y="47" width="210" height="1" fill="rgb(255,255,255)" fill-opacity="0.12"/><rect x="1759" y="48" width="532" height="1" fill="rgb(0,0,0)" fill-opacity="0.11"/><rect x="376" y="16" width="328" height="1" fill="rgb(255,255,255)" fill-opacity="0.04"/><rect x="1120" y="26" width="498" height="1" fill="rgb(255,255,255)" fill-opacity="0.11"/><rect x="1357" y="19" width="663" height="1" fill="rgb(255,255,255)" fill-opacity="0.10"/><rect x="1818" y="51" width="367" height="1" fill="rgb(0,0,0)" fill-opacity="0.06"/><rect x="1500" y="4" width="473" height="1" fill="rgb(255,255,255)" fill-opacity="0.10"/><rect x="1511" y="14" width="171" height="1" fill="rgb(0,0,0)" fill-opacity="0.12"/><rect x="1514" y="50" width="370" height="1" fill="rgb(255,255,255)" fill-opacity="0.08"/><rect x="1438" y="8" width="371" height="1" fill="rgb(255,255,255)" fill-opacity="0.13"/><rect x="590" y="45" width="237" height="1" fill="rgb(255,255,255)" fill-opacity="0.09"/><rect x="1491" y="0" width="575" height="1" fill="rgb(0,0,0)" fill-opacity="0.08"/><rect x="807" y="20" width="346" height="1" fill="rgb(0,0,0)" fill-opacity="0.12"/><rect x="121" y="23" width="268" height="1" fill="rgb(255,255,255)" fill-opacity="0.09"/><rect x="1702" y="36" width="566" height="1" fill="rgb(0,0,0)" fill-opacity="0.06"/><rect x="1023" y="40" width="488" height="1" fill="rgb(255,255,255)" fill-opacity="0.07"/><rect x="325" y="18" width="143" height="1" fill="rgb(255,255,255)" fill-opacity="0.06"/><rect x="749" y="49" width="567" height="1" fill="rgb(255,255,255)" fill-opacity="0.07"/><rect x="153" y="34" width="633" height="1" fill="rgb(0,0,0)" fill-opacity="0.11"/><rect x="1693" y="42" width="420" height="1" fill="rgb(255,255,255)" fill-opacity="0.12"/><rect x="1255" y="31" width="409" height="1" fill="rgb(255,255,255)" fill-opacity="0.13"/><rect x="966" y="7" width="244" height="1" fill="rgb(255,255,255)" fill-opacity="0.07"/><rect x="970" y="31" width="380" height="1" fill="rgb(0,0,0)" fill-opacity="0.15"/><rect x="846" y="15" width="415" height="1" fill="rgb(255,255,255)" fill-opacity="0.14"/><rect x="473" y="53" width="511" height="1" fill="rgb(255,255,255)" fill-opacity="0.10"/><rect x="587" y="29" width="340" height="1" fill="rgb(255,255,255)" fill-opacity="0.16"/><rect x="557" y="40" width="481" height="1" fill="rgb(255,255,255)" fill-opacity="0.04"/><rect x="1756" y="47" width="285" height="1" fill="rgb(255,255,255)" fill-opacity="0.16"/><rect x="1390" y="31" width="170" height="1" fill="rgb(255,255,255)" fill-opacity="0.07"/><rect x="511" y="8" width="614" height="1" fill="rgb(255,255,255)" fill-opacity="0.08"/><rect x="964" y="33" width="646" height="1" fill="rgb(255,255,255)" fill-opacity="0.07"/><rect x="963" y="16" width="593" height="1" fill="rgb(0,0,0)" fill-opacity="0.08"/><rect x="501" y="25" width="690" height="1" fill="rgb(255,255,255)" fill-opacity="0.14"/><rect x="1175" y="13" width="571" height="1" fill="rgb(255,255,255)" fill-opacity="0.08"/><rect x="68" y="19" width="683" height="1" fill="rgb(0,0,0)" fill-opacity="0.05"/><rect x="1318" y="25" width="629" height="1" fill="rgb(255,255,255)" fill-opacity="0.11"/><rect x="28" y="19" width="109" height="1" fill="rgb(255,255,255)" fill-opacity="0.14"/><rect x="1182" y="49" width="569" height="1" fill="rgb(0,0,0)" fill-opacity="0.15"/><rect x="109" y="39" width="498" height="1" fill="rgb(0,0,0)" fill-opacity="0.12"/><rect x="246" y="5" width="494" height="1" fill="rgb(0,0,0)" fill-opacity="0.09"/><rect x="1194" y="6" width="619" height="1" fill="rgb(255,255,255)" fill-opacity="0.09"/><rect x="-172" y="41" width="621" height="1" fill="rgb(255,255,255)" fill-opacity="0.06"/><rect x="342" y="45" width="267" height="1" fill="rgb(255,255,255)" fill-opacity="0.09"/><rect x="989" y="27" width="439" height="1" fill="rgb(255,255,255)" fill-opacity="0.15"/><rect x="-117" y="33" width="154" height="1" fill="rgb(255,255,255)" fill-opacity="0.14"/><rect x="738" y="25" width="89" height="1" fill="rgb(255,255,255)" fill-opacity="0.09"/><rect x="1860" y="42" width="375" height="1" fill="rgb(255,255,255)" fill-opacity="0.09"/><rect x="792" y="41" width="635" height="1" fill="rgb(255,255,255)" fill-opacity="0.12"/><rect x="1236" y="0" width="155" height="1" fill="rgb(255,255,255)" fill-opacity="0.16"/><rect x="55" y="55" width="373" height="1" fill="rgb(255,255,255)" fill-opacity="0.07"/><rect x="1340" y="28" width="196" height="1" fill="rgb(0,0,0)" fill-opacity="0.05"/><rect x="1259" y="45" width="170" height="1" fill="rgb(255,255,255)" fill-opacity="0.13"/><rect x="1289" y="35" width="366" height="1" fill="rgb(255,255,255)" fill-opacity="0.15"/><rect x="1306" y="3" width="87" height="1" fill="rgb(0,0,0)" fill-opacity="0.04"/><rect x="1098" y="52" width="321" height="1" fill="rgb(0,0,0)" fill-opacity="0.08"/><rect x="1553" y="55" width="458" height="1" fill="rgb(0,0,0)" fill-opacity="0.08"/><rect x="721" y="46" width="500" height="1" fill="rgb(0,0,0)" fill-opacity="0.06"/><rect x="1803" y="23" width="182" height="1" fill="rgb(255,255,255)" fill-opacity="0.14"/><rect x="1451" y="49" width="666" height="1" fill="rgb(255,255,255)" fill-opacity="0.13"/><rect x="388" y="18" width="466" height="1" fill="rgb(0,0,0)" fill-opacity="0.12"/><rect x="497" y="38" width="456" height="1" fill="rgb(0,0,0)" fill-opacity="0.16"/><rect x="1549" y="38" width="442" height="1" fill="rgb(255,255,255)" fill-opacity="0.16"/><rect x="1238" y="24" width="453" height="1" fill="rgb(0,0,0)" fill-opacity="0.15"/><rect x="1246" y="18" width="279" height="1" fill="rgb(255,255,255)" fill-opacity="0.07"/><rect x="1403" y="52" width="566" height="1" fill="rgb(255,255,255)" fill-opacity="0.07"/><rect x="1885" y="55" width="171" height="1" fill="rgb(0,0,0)" fill-opacity="0.16"/><rect x="1238" y="35" width="647" height="1" fill="rgb(255,255,255)" fill-opacity="0.08"/><rect x="818" y="35" width="317" height="1" fill="rgb(0,0,0)" fill-opacity="0.13"/><rect x="450" y="14" width="116" height="1" fill="rgb(0,0,0)" fill-opacity="0.09"/><rect x="1031" y="16" width="86" height="1" fill="rgb(255,255,255)" fill-opacity="0.09"/><rect x="1494" y="34" width="559" height="1" fill="rgb(255,255,255)" fill-opacity="0.07"/><rect x="1659" y="16" width="404" height="1" fill="rgb(255,255,255)" fill-opacity="0.10"/><rect x="247" y="12" width="137" height="1" fill="rgb(255,255,255)" fill-opacity="0.14"/><rect x="985" y="36" width="330" height="1" fill="rgb(255,255,255)" fill-opacity="0.10"/><rect x="1737" y="2" width="386" height="1" fill="rgb(255,255,255)" fill-opacity="0.14"/><rect x="1453" y="29" width="177" height="1" fill="rgb(255,255,255)" fill-opacity="0.11"/><rect x="1075" y="33" width="138" height="1" fill="rgb(0,0,0)" fill-opacity="0.06"/><rect x="821" y="36" width="432" height="1" fill="rgb(0,0,0)" fill-opacity="0.07"/><rect x="4" y="27" width="357" height="1" fill="rgb(0,0,0)" fill-opacity="0.11"/><rect x="333" y="8" width="103" height="1" fill="rgb(255,255,255)" fill-opacity="0.06"/><rect x="-142" y="5" width="102" height="1" fill="rgb(0,0,0)" fill-opacity="0.08"/><rect x="1789" y="31" width="644" height="1" fill="rgb(255,255,255)" fill-opacity="0.05"/><rect x="1737" y="25" width="518" height="1" fill="rgb(255,255,255)" fill-opacity="0.05"/><rect x="1145" y="14" width="673" height="1" fill="rgb(255,255,255)" fill-opacity="0.12"/><rect x="1584" y="28" width="310" height="1" fill="rgb(0,0,0)" fill-opacity="0.07"/><rect x="-119" y="11" width="239" height="1" fill="rgb(0,0,0)" fill-opacity="0.08"/><rect x="1558" y="1" width="109" height="1" fill="rgb(0,0,0)" fill-opacity="0.13"/><rect x="1399" y="41" width="380" height="1" fill="rgb(255,255,255)" fill-opacity="0.05"/><rect x="1773" y="0" width="500" height="1" fill="rgb(255,255,255)" fill-opacity="0.08"/><rect x="1170" y="48" width="372" height="1" fill="rgb(255,255,255)" fill-opacity="0.08"/><rect x="811" y="23" width="185" height="1" fill="rgb(255,255,255)" fill-opacity="0.07"/><rect x="1674" y="43" width="370" height="1" fill="rgb(0,0,0)" fill-opacity="0.15"/><rect x="1748" y="10" width="217" height="1" fill="rgb(0,0,0)" fill-opacity="0.15"/><rect x="94" y="47" width="357" height="1" fill="rgb(0,0,0)" fill-opacity="0.05"/><rect x="-154" y="53" width="127" height="1" fill="rgb(255,255,255)" fill-opacity="0.16"/><rect x="803" y="14" width="469" height="1" fill="rgb(255,255,255)" fill-opacity="0.06"/><rect x="179" y="3" width="360" height="1" fill="rgb(255,255,255)" fill-opacity="0.15"/><rect x="359" y="9" width="335" height="1" fill="rgb(255,255,255)" fill-opacity="0.06"/><rect x="423" y="53" width="579" height="1" fill="rgb(255,255,255)" fill-opacity="0.07"/><rect x="1697" y="29" width="151" height="1" fill="rgb(255,255,255)" fill-opacity="0.16"/><rect x="1203" y="50" width="211" height="1" fill="rgb(255,255,255)" fill-opacity="0.10"/><rect x="1385" y="16" width="682" height="1" fill="rgb(255,255,255)" fill-opacity="0.09"/><rect x="1743" y="15" width="140" height="1" fill="rgb(0,0,0)" fill-opacity="0.07"/><rect x="1548" y="3" width="687" height="1" fill="rgb(0,0,0)" fill-opacity="0.06"/><rect x="1495" y="28" width="291" height="1" fill="rgb(255,255,255)" fill-opacity="0.06"/><rect x="1782" y="53" width="258" height="1" fill="rgb(255,255,255)" fill-opacity="0.08"/><rect x="258" y="26" width="434" height="1" fill="rgb(255,255,255)" fill-opacity="0.06"/><rect x="284" y="49" width="189" height="1" fill="rgb(0,0,0)" fill-opacity="0.11"/><rect x="1335" y="38" width="552" height="1" fill="rgb(255,255,255)" fill-opacity="0.06"/><rect x="1286" y="42" width="583" height="1" fill="rgb(255,255,255)" fill-opacity="0.11"/><rect x="1254" y="4" width="402" height="1" fill="rgb(0,0,0)" fill-opacity="0.14"/><rect x="1502" y="33" width="288" height="1" fill="rgb(0,0,0)" fill-opacity="0.14"/><rect x="-10" y="31" width="334" height="1" fill="rgb(255,255,255)" fill-opacity="0.13"/><rect x="359" y="42" width="195" height="1" fill="rgb(255,255,255)" fill-opacity="0.14"/><rect x="1275" y="10" width="436" height="1" fill="rgb(255,255,255)" fill-opacity="0.14"/><rect x="1834" y="28" width="124" height="1" fill="rgb(255,255,255)" fill-opacity="0.08"/><rect x="1617" y="53" width="279" height="1" fill="rgb(255,255,255)" fill-opacity="0.13"/><rect x="1686" y="48" width="261" height="1" fill="rgb(0,0,0)" fill-opacity="0.05"/><rect x="878" y="28" width="409" height="1" fill="rgb(255,255,255)" fill-opacity="0.10"/><rect x="270" y="5" width="193" height="1" fill="rgb(255,255,255)" fill-opacity="0.05"/><rect x="1806" y="52" width="92" height="1" fill="rgb(0,0,0)" fill-opacity="0.15"/><rect x="-163" y="16" width="452" height="1" fill="rgb(255,255,255)" fill-opacity="0.11"/><rect x="733" y="44" width="297" height="1" fill="rgb(255,255,255)" fill-opacity="0.05"/><rect x="58" y="17" width="386" height="1" fill="rgb(255,255,255)" fill-opacity="0.10"/><rect x="55" y="7" width="628" height="1" fill="rgb(255,255,255)" fill-opacity="0.10"/><rect x="109" y="14" width="435" height="1" fill="rgb(255,255,255)" fill-opacity="0.13"/><rect x="-161" y="52" width="474" height="1" fill="rgb(255,255,255)" fill-opacity="0.12"/><rect x="904" y="38" width="325" height="1" fill="rgb(0,0,0)" fill-opacity="0.15"/><rect x="641" y="21" width="600" height="1" fill="rgb(0,0,0)" fill-opacity="0.13"/></svg>
<div class="a" style="left:0;top:0;width:1919px;height:56px;background:linear-gradient(to right, rgba(0,0,0,0.45) 0px, rgba(0,0,0,0.25) 300px, rgba(0,0,0,0) 750px, rgba(0,0,0,0) 1150px, rgba(0,0,0,0.4) 1550px, rgba(0,0,0,0.55) 1919px)"></div>
<div class="a" style="left:0;top:56px;width:1919px;height:5px;background:#f07023"></div>
<svg class="a" style="left:0;top:0" width="100" height="32"><polygon points="20.60,6.20 81.70,6.20 75.73,25.75 14.63,25.75" fill="#f07023"/><polygon points="22.14,8.70 26.54,8.70 21.95,23.70 17.55,23.70" fill="#111"/><polygon points="27.94,8.70 42.84,8.70 38.25,23.70 23.35,23.70" fill="#111"/><polygon points="45.84,8.70 61.34,8.70 56.75,23.70 41.25,23.70" fill="#111"/><polygon points="64.34,8.70 79.34,8.70 74.75,23.70 59.75,23.70" fill="#111"/><polygon points="31.33,12.00 38.03,12.00 35.74,19.50 29.04,19.50" fill="#f07023"/><polygon points="48.73,12.00 55.83,12.00 55.22,14.00 48.12,14.00" fill="#f07023"/><polygon points="47.04,18.20 58.64,18.20 58.15,19.80 46.55,19.80" fill="#f07023"/><polygon points="63.13,12.00 74.03,12.00 73.42,14.00 62.52,14.00" fill="#f07023"/><polygon points="65.04,18.20 72.04,18.20 71.55,19.80 64.55,19.80" fill="#f07023"/></svg>
<div class="t" style="left:84.5px;top:5.5px;font-size:21px;font-weight:bold;font-style:italic;color:#fff;letter-spacing:-0.3px">StatiCa</div>
<div class="t" style="left:156.5px;top:7.5px;font-size:9px;color:#d8d8d8">&#174;</div>
<div class="t" style="left:181px;top:8px;font-size:16.5px;font-weight:bold;font-style:italic;color:#fff;letter-spacing:-1px">DETAIL</div>
<div class="t" style="left:13.5px;top:35px;font-size:9.2px;font-weight:bold;font-style:italic;color:#f2f2f2">Calculate yesterday&#8217;s estimates</div>
<div class="t c" style="left:931px;top:10px;font-size:13.5px;color:#e6e6e6">Diaphragm.ideaDet</div>
<div class="tab" style="left:215.0px;background:#a3a3a3">Project</div>
<div class="tab" style="left:319.0px;background:#f07023">Design</div>
<div class="tab" style="left:422.0px;background:#a3a3a3">Tools</div>
<div class="tab" style="left:525.0px;background:#a3a3a3">Check</div>
<div class="tab" style="left:628.0px;background:#a3a3a3">Report</div>
<div class="tab" style="left:731.0px;background:#a3a3a3">Materials</div>
<div class="a" style="left:1841px;top:8px;width:17px;height:16.5px;background:#e8e8e8;border-radius:2px"></div>
<div class="a" style="left:1846px;top:18px;width:7px;height:2px;background:#222"></div>
<div class="a" style="left:1868px;top:8px;width:17px;height:16.5px;background:#e8e8e8;border-radius:2px"></div>
<div class="a" style="left:1872px;top:12px;width:9px;height:8.5px;border:2px solid #222"></div>
<div class="a" style="left:1895px;top:8px;width:16.5px;height:16.5px;background:#f07023;border-radius:2px"></div>
<svg class="a" style="left:1895px;top:8px" width="17" height="17"><path d="M4.5 4.5 L12 12 M12 4.5 L4.5 12" stroke="#222" stroke-width="2"/></svg>
<div class="a" style="left:1630px;top:33px;width:200px;height:18px;background:#fff;border:1px solid #bbb"></div>
<svg class="a" style="left:1810px;top:33px" width="20" height="18"><circle cx="8.5" cy="7.5" r="4.5" fill="none" stroke="#aaa" stroke-width="1.6"/><path d="M11.8 10.8 L16 15" stroke="#aaa" stroke-width="2"/></svg>
<div class="a" style="left:1895px;top:33px;width:16.5px;height:17px;background:#f07023;border-radius:2px"></div>
<div class="a" style="left:1902px;top:37px;width:2.5px;height:2.5px;background:#222"></div>
<div class="a" style="left:1902px;top:41px;width:2.5px;height:6px;background:#222"></div>
<div class="a" style="left:0;top:157px;width:1919px;height:1px;background:#d0d0d0"></div>
<div class="sep" style="left:145px"></div>
<div class="sep" style="left:264px"></div>
<div class="sep" style="left:385px"></div>
<div class="sep" style="left:471px"></div>
<div class="sep" style="left:557px"></div>
<div class="sep" style="left:665px"></div>
<div class="sep" style="left:820px"></div>
<div class="sep" style="left:1070px"></div>
<div class="a" style="left:321px;top:68px;width:59px;height:70px;background:#dedede"></div>
<div class="a" style="left:432px;top:68px;width:34px;height:70px;background:#dedede"></div>
<div class="a" style="left:6px;top:67px;width:59px;height:30px;background:#f07023"></div>
<div class="t" style="left:12px;top:77px;font-size:12px;letter-spacing:-0.6px;color:#fff">DRM1</div>
<svg class="a" style="left:53px;top:79px" width="8" height="5"><path d="M0.5 0.5 L6.5 0.5 L3.5 3.5Z" fill="#fff"/></svg>
<div class="t c" style="left:87px;top:105px">New</div>
<div class="t c" style="left:123px;top:105px">Copy</div>
<div class="t c" style="left:169px;top:105px">Undo</div>
<div class="t c" style="left:205.5px;top:105px">Redo</div>
<div class="t c" style="left:242px;top:105px">Save</div>
<div class="t c" style="left:295.5px;top:104.2px">Member</div>
<div class="t c" style="left:295.5px;top:119.2px">names</div>
<div class="t c" style="left:350.5px;top:104.2px">Dimension</div>
<div class="t c" style="left:350.5px;top:119.2px">lines</div>
<div class="t c" style="left:411px;top:104.2px">Rebars</div>
<div class="t c" style="left:448.5px;top:104.2px">Grid</div>
<div class="t c" style="left:496px;top:105px">New</div>
<div class="t c" style="left:533px;top:105px">Gallery</div>
<div class="t c" style="left:586px;top:105px">Settings</div>
<div class="t c" style="left:635px;top:105px">Calculate</div>
<div class="t c" style="left:690px;top:105px">Create</div>
<div class="t c" style="left:726.5px;top:105px">Apply</div>
<div class="t c" style="left:845px;top:104.2px">Model</div>
<div class="t c" style="left:845px;top:119.2px">entity</div>
<div class="t c" style="left:882px;top:104.2px">Load</div>
<div class="t c" style="left:882px;top:119.2px">case</div>
<div class="t c" style="left:935.5px;top:105px">Combination</div>
<div class="t c" style="left:999.5px;top:104.2px">Rebar</div>
<div class="t c" style="left:999.5px;top:119.2px">assembly</div>
<div class="t c" style="left:1046px;top:104.2px">DXF</div>
<div class="t c" style="left:1046px;top:119.2px">Import</div>
<div class="t" style="left:766px;top:73px">Manager</div>
<div class="t" style="left:766px;top:95px">Save</div>
<div class="t" style="left:766px;top:117px">Open</div>
<div class="gl" style="left:73px;top:142px;color:#f4a87c;font-weight:bold">Project items</div>
<div class="gl" style="left:206px;top:142px">Data</div>
<div class="gl" style="left:325px;top:142px">Labels</div>
<div class="gl" style="left:429px;top:142px">Draw</div>
<div class="gl" style="left:515px;top:142px">Pictures</div>
<div class="gl" style="left:612px;top:142px">Calculation</div>
<div class="gl" style="left:744px;top:142px">Templates</div>
<div class="gl" style="left:947px;top:142px">New</div>
<svg class="a" style="left:0;top:0" width="1080" height="160"><path d="M85.6 74.4 H81.6 L73.5 82.2 V100.5 H95.5 V84.3" fill="none" stroke="#111" stroke-width="1.4"/><path d="M73.5 82.2 H81.6 V74.4" fill="none" stroke="#111" stroke-width="1.4"/><path d="M90 74.5 H101 M95.5 69.2 V79.6" fill="none" stroke="#f07023" stroke-width="1.4"/><path d="M117.5 74.4 H131.4 V99.3 H110 V82.2 Z" fill="none" stroke="#111" stroke-width="1.4"/><path d="M110 82.2 H117.5 V74.4" fill="none" stroke="#666" stroke-width="1.4"/><path d="M110 82.4 V99.3" fill="none" stroke="#777" stroke-width="1.5"/><path d="M122.1 69.5 H136.3 V95.5" fill="none" stroke="#f4a070" stroke-width="1.4"/><path d="M154.5 74.5 H172.5 A12.9 12.9 0 0 1 172.5 100.3 H155.3" fill="none" stroke="#111" stroke-width="1.4"/><path d="M158.5 70 L154.3 74.5 L158.5 78.7" fill="none" stroke="#111" stroke-width="1.4"/><path d="M221.7 74.5 H203.2 A12.9 12.9 0 0 0 203.2 100.3 H220.7" fill="none" stroke="#111" stroke-width="1.4"/><path d="M217.5 70 L221.8 74.5 L217.5 78.7" fill="none" stroke="#111" stroke-width="1.4"/><path d="M242.4 69.2 V93.6 M238.1 89.2 L242.4 93.6 L246.8 89.2" fill="none" stroke="#f07023" stroke-width="1.4"/><path d="M226.4 94.2 V100.2 H257.5 V94.2" fill="none" stroke="#111" stroke-width="1.4"/><path d="M280.4 98.5 L291.4 71.4 H301 L311.7 98.5 H305.1 L303.3 93.2 H288.8 L287 98.5 Z M291.4 87.3 L296 78.1 L301 87.3 Z" fill="none" stroke="#111" stroke-width="1.2"/><path d="M335.3 78 V96 M366.6 78 V96 M335.3 79.5 H366.6 M340.9 75.2 L335.8 79.5 L340.9 83.7 M361 75.2 L366.1 79.5 L361 83.7" fill="none" stroke="#111" stroke-width="1.4"/><rect x="400.2" y="69.3" width="21.4" height="31.2" rx="4" fill="none" stroke="#111" stroke-width="1.4"/><circle cx="405" cy="74" r="0.9" fill="#111"/><circle cx="417" cy="74" r="0.9" fill="#111"/><circle cx="405" cy="95.9" r="1.8" fill="#111"/><circle cx="417" cy="95.9" r="1.8" fill="#111"/><path d="M439.5 69.3 V100.8 M433 94.5 H464.6" fill="none" stroke="#111" stroke-width="1.4"/><path d="M496.8 74.4 H480.4 V100.1 H506.7 V84.3" fill="none" stroke="#111" stroke-width="1.4"/><path d="M480.4 100.1 L488.3 91.5 L492.5 95.5 L500.7 87.5 L506.7 92.7" fill="none" stroke="#111" stroke-width="1.4"/><circle cx="492.5" cy="82.5" r="1.8" fill="#111"/><path d="M501.2 74.4 H511.8 M506.5 69.1 V79.8" fill="none" stroke="#f07023" stroke-width="1.4"/><rect x="517.5" y="74.4" width="26.1" height="25.7" fill="none" stroke="#111" stroke-width="1.4"/><path d="M521.2 69.2 H548.7 V96.7" fill="none" stroke="#111" stroke-width="1.4"/><path d="M517.5 100.1 L525.4 91.5 L529.6 95.5 L537.8 87.5 L543.6 92.7" fill="none" stroke="#111" stroke-width="1.4"/><circle cx="529.4" cy="82.5" r="1.8" fill="#111"/><path d="M598.86 82.38 L602.27 82.79 L602.27 86.81 L598.86 87.22 L597.07 91.54 L599.19 94.25 L596.35 97.09 L593.64 94.97 L589.32 96.76 L588.91 100.17 L584.89 100.17 L584.48 96.76 L580.16 94.97 L577.45 97.09 L574.61 94.25 L576.73 91.54 L574.94 87.22 L571.53 86.81 L571.53 82.79 L574.94 82.38 L576.73 78.06 L574.61 75.35 L577.45 72.51 L580.16 74.63 L584.48 72.84 L584.89 69.43 L588.91 69.43 L589.32 72.84 L593.64 74.63 L596.35 72.51 L599.19 75.35 L597.07 78.06Z" fill="none" stroke="#111" stroke-width="1.2" stroke-linejoin="round"/><path d="M581.9 80.3 L578 84.8 L581.9 89.2 M589.3 76.7 L584.9 93.5 M592.3 80.3 L596.3 84.8 L592.3 89.2" fill="none" stroke="#111" stroke-width="1.4"/><rect x="619.5" y="69.2" width="31.2" height="31.2" fill="none" stroke="#111" stroke-width="1.4"/><path d="M622.2 77.3 H632.6 M627.4 72.1 V82.5 M638.3 77.3 H647.7 M623.6 88.7 L631.2 96.3 M631.2 88.7 L623.6 96.3 M638.3 92.5 H647.7" fill="none" stroke="#f07023" stroke-width="1.4"/><circle cx="643" cy="88" r="0.9" fill="#f07023"/><circle cx="643" cy="96.9" r="0.9" fill="#f07023"/><path d="M675.6 69.2 V100.9 M681.6 69.2 V100.9 M681.6 84.5 H698 M681.6 88.2 H698" fill="none" stroke="#111" stroke-width="1.4"/><circle cx="700.9" cy="73.8" r="4.2" fill="none" stroke="#f07023" stroke-width="1.4"/><path d="M703.9 76.8 L706.7 79.7" fill="none" stroke="#f07023" stroke-width="1.4"/><path d="M711.5 69.2 V100.9 M717.5 69.2 V100.9 M717.5 84.5 H733.8 M717.5 88.2 H733.8" fill="none" stroke="#111" stroke-width="1.4"/><path d="M738.6 79.7 V69.6 M734.2 73.6 L738.6 69.2 L742.9 73.6" fill="none" stroke="#f07023" stroke-width="1.4"/><path d="M746.3 70.4 V85.8 M750.5 70.4 V85.8" fill="none" stroke="#111" stroke-width="1.4"/><path d="M750.5 77.6 H758.5 M750.5 81.3 H758.5" fill="none" stroke="#555" stroke-width="1.8"/><path d="M755.6 76 L756.3 73.6 L760.2 70 L761.8 71.6 L757.9 75.3 Z" fill="none" stroke="#f07023" stroke-width="1"/><path d="M754.4 92.1 V104 M751.2 100.8 L754.4 104 L757.6 100.8" fill="none" stroke="#f07023" stroke-width="1.4"/><path d="M746.3 104.2 V107.4 H761.6 V104.2" fill="none" stroke="#111" stroke-width="1.4"/><path d="M754.4 126.4 V114.5 M751.2 117.7 L754.4 114.5 L757.6 117.7" fill="none" stroke="#f07023" stroke-width="1.4"/><path d="M746.3 125.9 V129.3 H761.6 V125.9" fill="none" stroke="#111" stroke-width="1.4"/><path d="M846.5 88.4 H861.5 V100.4 H846.5 Z M830.2 80 H844.5 L861.5 88.4 M830.2 80 L846.5 88.4 M830.2 80 V90.7 L846.5 100.4" fill="none" stroke="#111" stroke-width="1.2"/><path d="M851.2 74.6 H861.8 M856.5 69.3 V79.9" fill="none" stroke="#f07023" stroke-width="1.4"/><path d="M873.5 74.4 V100.4 M881.4 74.4 V100.4 M889.5 82.2 V100.4 M866.4 100.4 H897.7 M869 95.5 L873.5 100.4 L877.5 95.5 L881.4 100.4 L885.3 95.5 L889.5 100.4 L894 95.5" fill="none" stroke="#111" stroke-width="1.2"/><path d="M887.2 74.6 H897.8 M892.5 69.3 V79.9" fill="none" stroke="#f07023" stroke-width="1.4"/><path d="M936.8 76.6 V74.6 H921.4 L929.9 87.7 L921.4 100.4 H936.8 V98.4" fill="none" stroke="#111" stroke-width="1.4"/><path d="M942.2 74.6 H952.8 M947.5 69.3 V79.9" fill="none" stroke="#f07023" stroke-width="1.4"/><path d="M1001.5 69.4 H988.2 A4 4 0 0 0 984.2 73.4 V96.7 A4 4 0 0 0 988.2 100.7 H1001.8 A4 4 0 0 0 1005.8 96.7 V81.5" fill="none" stroke="#111" stroke-width="1.4"/><circle cx="989.1" cy="74.1" r="0.9" fill="#111"/><circle cx="1001.1" cy="74.1" r="0.9" fill="#111"/><circle cx="989.1" cy="96.1" r="1.8" fill="#111"/><circle cx="1001.1" cy="96.1" r="1.8" fill="#111"/><path d="M1005.3 74.6 H1015.9 M1010.6 69.3 V79.9" fill="none" stroke="#f07023" stroke-width="1.4"/><path d="M1049.7 69.4 H1038.7 L1030.4 77 V100.4 H1057.8 V83.5 M1038.7 69.4 V77 H1030.4" fill="none" stroke="#111" stroke-width="1.4"/><text x="0" y="0" font-family="Liberation Sans" text-anchor="middle" fill="#333" stroke="#333" stroke-width="0.35" transform="translate(1043.3 93.7) scale(0.78 1)" style="font-size:13.8px">DXF</text><path d="M1057.5 69.5 V79.4 M1053.2 75.2 L1057.5 79.6 L1061.8 75.2" fill="none" stroke="#f07023" stroke-width="1.4"/></svg>
<svg class="a" style="left:0;top:0" width="1445" height="200"><rect x="1308.3" y="158" width="26.6" height="25.8" fill="#ebebeb"/><circle cx="1228.2" cy="169.4" r="6" fill="none" stroke="#222" stroke-width="1.3"/><path d="M1232.6 173.8 L1237.2 178.6" stroke="#222" stroke-width="1.4"/><path d="M1247 168.8 L1251 172.2 L1255 168.8" fill="none" stroke="#333" stroke-width="1.3"/><path d="M1293 168.8 L1297 172.2 L1301 168.8" fill="none" stroke="#333" stroke-width="1.3"/><rect x="1259.6" y="160.4" width="1" height="21" fill="#c4c4c4"/><rect x="1305.5" y="160.4" width="1" height="21" fill="#c4c4c4"/><rect x="1362.4" y="160.4" width="1" height="21" fill="#c4c4c4"/><rect x="1269" y="164.9" width="14.3" height="12" rx="2" fill="none" stroke="#111" stroke-width="1.5"/><text x="1276.1" y="174.6" font-family="Liberation Sans" font-weight="bold" font-size="8" text-anchor="middle" fill="#111">2D</text><path d="M1314 167.5 H1325.8 V178.6 H1314 Z M1314 167.5 L1318 163.4 H1329.8 L1325.8 167.5 M1329.8 163.4 V174.5 L1325.8 178.6 M1318 163.4 V174.5 H1329.8 M1318 174.5 L1314 178.6" fill="none" stroke="#7a7a7a" stroke-width="1.1"/><path d="M1341 167.5 H1353 V178.6 H1341 Z" fill="#6e6e6e"/><path d="M1341 167.5 L1345 163.4 H1357 L1353 167.5 Z" fill="#8a8a8a"/><path d="M1353 167.5 L1357 163.4 V174.5 L1353 178.6 Z" fill="#5a5a5a"/><path d="M1370 168.5 L1380 165.4 L1385.8 167.5 L1376 171 Z M1370 168.5 V174 L1376 176.6 V171 M1376 176.6 L1385.8 172.8 V167.5" fill="none" stroke="#6a6a6a" stroke-width="1.1"/><path d="M1397.5 171 L1404.3 164.5 L1411.2 171 M1399.3 169.5 V177.5 H1402.3 V173 H1406.3 V177.5 H1409.3 V169.5" fill="none" stroke="#b8b8b8" stroke-width="1.1"/><path d="M1423.5 168 V163.5 H1428 M1423.5 163.5 L1428 168 M1434.5 163.5 H1439 V168 M1439 163.5 L1434.5 168 M1423.5 174 V178.5 H1428 M1423.5 178.5 L1428 174 M1439 174 V178.5 H1434.5 M1439 178.5 L1434.5 174" fill="none" stroke="#111" stroke-width="1.3"/></svg>
<svg class="a" style="left:0;top:0" width="1445" height="691"><line x1="96.0" y1="633" x2="96.0" y2="318" stroke="#a8a8a8" stroke-width="1" stroke-dasharray="1 2.75"/><line x1="171.0" y1="633" x2="171.0" y2="318" stroke="#a8a8a8" stroke-width="1" stroke-dasharray="1 2.75"/><line x1="246.0" y1="633" x2="246.0" y2="318" stroke="#a8a8a8" stroke-width="1" stroke-dasharray="1 2.75"/><line x1="321.0" y1="633" x2="321.0" y2="318" stroke="#a8a8a8" stroke-width="1" stroke-dasharray="1 2.75"/><line x1="396.0" y1="633" x2="396.0" y2="318" stroke="#a8a8a8" stroke-width="1" stroke-dasharray="1 2.75"/><line x1="471.0" y1="633" x2="471.0" y2="318" stroke="#a8a8a8" stroke-width="1" stroke-dasharray="1 2.75"/><line x1="546.0" y1="633" x2="546.0" y2="318" stroke="#a8a8a8" stroke-width="1" stroke-dasharray="1 2.75"/><line x1="621.0" y1="633" x2="621.0" y2="318" stroke="#a8a8a8" stroke-width="1" stroke-dasharray="1 2.75"/><line x1="696.0" y1="633" x2="696.0" y2="318" stroke="#a8a8a8" stroke-width="1" stroke-dasharray="1 2.75"/><line x1="771.0" y1="633" x2="771.0" y2="318" stroke="#a8a8a8" stroke-width="1" stroke-dasharray="1 2.75"/><line x1="846.0" y1="633" x2="846.0" y2="318" stroke="#a8a8a8" stroke-width="1" stroke-dasharray="1 2.75"/><line x1="921.0" y1="633" x2="921.0" y2="318" stroke="#a8a8a8" stroke-width="1" stroke-dasharray="1 2.75"/><line x1="996.0" y1="633" x2="996.0" y2="318" stroke="#a8a8a8" stroke-width="1" stroke-dasharray="1 2.75"/><line x1="1071.0" y1="633" x2="1071.0" y2="318" stroke="#a8a8a8" stroke-width="1" stroke-dasharray="1 2.75"/><line x1="1146.0" y1="633" x2="1146.0" y2="318" stroke="#a8a8a8" stroke-width="1" stroke-dasharray="1 2.75"/><line x1="1221.0" y1="633" x2="1221.0" y2="318" stroke="#a8a8a8" stroke-width="1" stroke-dasharray="1 2.75"/><line x1="88" y1="626.5" x2="1228" y2="626.5" stroke="#a8a8a8" stroke-width="1" stroke-dasharray="1 2.75"/><line x1="88" y1="551.5" x2="1228" y2="551.5" stroke="#a8a8a8" stroke-width="1" stroke-dasharray="1 2.75"/><line x1="88" y1="476.5" x2="1228" y2="476.5" stroke="#a8a8a8" stroke-width="1" stroke-dasharray="1 2.75"/><line x1="88" y1="401.5" x2="1228" y2="401.5" stroke="#a8a8a8" stroke-width="1" stroke-dasharray="1 2.75"/><line x1="88" y1="326.5" x2="1228" y2="326.5" stroke="#a8a8a8" stroke-width="1" stroke-dasharray="1 2.75"/><line x1="208.5" y1="633.5" x2="208.5" y2="318" stroke="#a9a9a9" stroke-width="1" stroke-dasharray="11.5 5.35 0.5 5.33"/><line x1="283.5" y1="633.5" x2="283.5" y2="318" stroke="#a9a9a9" stroke-width="1" stroke-dasharray="11.5 5.35 0.5 5.33"/><line x1="358.5" y1="633.5" x2="358.5" y2="318" stroke="#a9a9a9" stroke-width="1" stroke-dasharray="11.5 5.35 0.5 5.33"/><line x1="433.5" y1="633.5" x2="433.5" y2="318" stroke="#a9a9a9" stroke-width="1" stroke-dasharray="11.5 5.35 0.5 5.33"/><line x1="508.5" y1="633.5" x2="508.5" y2="318" stroke="#a9a9a9" stroke-width="1" stroke-dasharray="11.5 5.35 0.5 5.33"/><line x1="583.5" y1="633.5" x2="583.5" y2="318" stroke="#a9a9a9" stroke-width="1" stroke-dasharray="11.5 5.35 0.5 5.33"/><line x1="658.5" y1="633.5" x2="658.5" y2="318" stroke="#a9a9a9" stroke-width="1" stroke-dasharray="11.5 5.35 0.5 5.33"/><line x1="733.5" y1="633.5" x2="733.5" y2="318" stroke="#a9a9a9" stroke-width="1" stroke-dasharray="11.5 5.35 0.5 5.33"/><line x1="808.5" y1="633.5" x2="808.5" y2="318" stroke="#a9a9a9" stroke-width="1" stroke-dasharray="11.5 5.35 0.5 5.33"/><line x1="883.5" y1="633.5" x2="883.5" y2="318" stroke="#a9a9a9" stroke-width="1" stroke-dasharray="11.5 5.35 0.5 5.33"/><line x1="958.5" y1="633.5" x2="958.5" y2="318" stroke="#a9a9a9" stroke-width="1" stroke-dasharray="11.5 5.35 0.5 5.33"/><line x1="1033.5" y1="633.5" x2="1033.5" y2="318" stroke="#a9a9a9" stroke-width="1" stroke-dasharray="11.5 5.35 0.5 5.33"/><line x1="1108.5" y1="633.5" x2="1108.5" y2="318" stroke="#a9a9a9" stroke-width="1" stroke-dasharray="11.5 5.35 0.5 5.33"/><line x1="1183.5" y1="633.5" x2="1183.5" y2="318" stroke="#a9a9a9" stroke-width="1" stroke-dasharray="11.5 5.35 0.5 5.33"/><line x1="88.3" y1="513.5" x2="1228" y2="513.5" stroke="#a9a9a9" stroke-width="1" stroke-dasharray="11.5 5.35 0.5 5.33"/><line x1="88.3" y1="438.5" x2="1228" y2="438.5" stroke="#a9a9a9" stroke-width="1" stroke-dasharray="11.5 5.35 0.5 5.33"/><line x1="88.3" y1="363.5" x2="1228" y2="363.5" stroke="#a9a9a9" stroke-width="1" stroke-dasharray="11.5 5.35 0.5 5.33"/><path d="M133.00,368.60 320.50,371.70 658.00,363.20 995.50,371.70 1183.00,368.60 1183.00,394.50 957.50,408.20 845.50,588.60 471.00,588.60 360.50,408.20 133.00,394.50Z M605.50,420.00 710.50,420.00 710.50,555.00 605.50,555.00Z" fill="#c8c8c8" fill-rule="evenodd"/><clipPath id="mc"><path d="M136.20,371.85 136.20,391.49 362.36,405.11 472.79,585.40 843.72,585.40 955.65,405.11 1179.80,391.49 1179.80,371.85 995.49,374.90 658.00,366.40 320.51,374.90 136.20,371.85Z M602.30,416.80 713.70,416.80 713.70,558.20 602.30,558.20 602.30,416.80Z " clip-rule="evenodd"/></clipPath><path d="M129.25 350V600M140.50 350V600M151.75 350V600M163.00 350V600M174.25 350V600M185.50 350V600M196.75 350V600M208.00 350V600M219.25 350V600M230.50 350V600M241.75 350V600M253.00 350V600M264.25 350V600M275.50 350V600M286.75 350V600M298.00 350V600M309.25 350V600M320.50 350V600M331.75 350V600M343.00 350V600M354.25 350V600M365.50 350V600M376.75 350V600M388.00 350V600M399.25 350V600M410.50 350V600M421.75 350V600M433.00 350V600M444.25 350V600M455.50 350V600M466.75 350V600M478.00 350V600M489.25 350V600M500.50 350V600M511.75 350V600M523.00 350V600M534.25 350V600M545.50 350V600M556.75 350V600M568.00 350V600M579.25 350V600M590.50 350V600M601.75 350V600M613.00 350V600M624.25 350V600M635.50 350V600M646.75 350V600M658.00 350V600M669.25 350V600M680.50 350V600M691.75 350V600M703.00 350V600M714.25 350V600M725.50 350V600M736.75 350V600M748.00 350V600M759.25 350V600M770.50 350V600M781.75 350V600M793.00 350V600M804.25 350V600M815.50 350V600M826.75 350V600M838.00 350V600M849.25 350V600M860.50 350V600M871.75 350V600M883.00 350V600M894.25 350V600M905.50 350V600M916.75 350V600M928.00 350V600M939.25 350V600M950.50 350V600M961.75 350V600M973.00 350V600M984.25 350V600M995.50 350V600M1006.75 350V600M1018.00 350V600M1029.25 350V600M1040.50 350V600M1051.75 350V600M1063.00 350V600M1074.25 350V600M1085.50 350V600M1096.75 350V600M1108.00 350V600M1119.25 350V600M1130.50 350V600M1141.75 350V600M1153.00 350V600M1164.25 350V600M1175.50 350V600M1186.75 350V600M120 363.65H1200M120 374.90H1200M120 386.15H1200M120 397.40H1200M120 408.65H1200M120 419.90H1200M120 431.15H1200M120 442.40H1200M120 453.65H1200M120 464.90H1200M120 476.15H1200M120 487.40H1200M120 498.65H1200M120 509.90H1200M120 521.15H1200M120 532.40H1200M120 543.65H1200M120 554.90H1200M120 566.15H1200M120 577.40H1200M120 588.65H1200M120 599.90H1200" stroke="#f07a35" stroke-width="1.3" fill="none" clip-path="url(#mc)"/><path d="M133.00,368.60 320.50,371.70 658.00,363.20 995.50,371.70 1183.00,368.60 1183.00,394.50 957.50,408.20 845.50,588.60 471.00,588.60 360.50,408.20 133.00,394.50Z" fill="none" stroke="#000" stroke-width="2.2" stroke-linejoin="miter"/><path d="M605.50,420.00 710.50,420.00 710.50,555.00 605.50,555.00Z" fill="none" stroke="#000" stroke-width="2.2"/><line x1="88.5" y1="588.5" x2="1217" y2="588.5" stroke="#404040" stroke-width="1.1" stroke-dasharray="11.5 5.1 1 5.08"/><line x1="133.5" y1="633" x2="133.5" y2="330" stroke="#404040" stroke-width="1.1" stroke-dasharray="11.5 5.1 1 5.08"/><clipPath id="c14"><rect x="1170" y="396" width="30" height="192"/></clipPath><line x1="1183" y1="633.8" x2="1183" y2="318" stroke="#a6a6a6" stroke-width="2" stroke-dasharray="11.5 5.35 0.5 5.33" clip-path="url(#c14)"/><clipPath id="cbe"><rect x="472" y="580" width="373" height="20"/></clipPath><line x1="472" y1="588.6" x2="845" y2="588.6" stroke="#000" stroke-width="2.3"/><line x1="88.5" y1="588.6" x2="1217" y2="588.6" stroke="#555" stroke-width="2.3" stroke-dasharray="11.5 11.18" clip-path="url(#cbe)"/><path d="M133.3 311 L129.6 330 L137 330 Z" fill="#000"/><path d="M1236 588.5 L1217 584.8 L1217 592.2 Z" fill="#000"/><text x="133.5" y="308" font-family="Liberation Sans" font-size="13" text-anchor="middle" fill="#111">Z</text><text x="1240.5" y="589" font-family="Liberation Sans" font-size="13" text-anchor="middle" fill="#111">X</text><text x="133.3" y="642.4" font-family="Liberation Sans" font-size="10.4" text-anchor="middle" textLength="17.8" lengthAdjust="spacingAndGlyphs" fill="#111">0.00</text><text x="208.3" y="642.4" font-family="Liberation Sans" font-size="10.4" text-anchor="middle" textLength="17.8" lengthAdjust="spacingAndGlyphs" fill="#111">1.00</text><text x="283.3" y="642.4" font-family="Liberation Sans" font-size="10.4" text-anchor="middle" textLength="17.8" lengthAdjust="spacingAndGlyphs" fill="#111">2.00</text><text x="358.3" y="642.4" font-family="Liberation Sans" font-size="10.4" text-anchor="middle" textLength="17.8" lengthAdjust="spacingAndGlyphs" fill="#111">3.00</text><text x="433.3" y="642.4" font-family="Liberation Sans" font-size="10.4" text-anchor="middle" textLength="17.8" lengthAdjust="spacingAndGlyphs" fill="#111">4.00</text><text x="508.3" y="642.4" font-family="Liberation Sans" font-size="10.4" text-anchor="middle" textLength="17.8" lengthAdjust="spacingAndGlyphs" fill="#111">5.00</text><text x="583.3" y="642.4" font-family="Liberation Sans" font-size="10.4" text-anchor="middle" textLength="17.8" lengthAdjust="spacingAndGlyphs" fill="#111">6.00</text><text x="658.3" y="642.4" font-family="Liberation Sans" font-size="10.4" text-anchor="middle" textLength="17.8" lengthAdjust="spacingAndGlyphs" fill="#111">7.00</text><text x="733.3" y="642.4" font-family="Liberation Sans" font-size="10.4" text-anchor="middle" textLength="17.8" lengthAdjust="spacingAndGlyphs" fill="#111">8.00</text><text x="808.3" y="642.4" font-family="Liberation Sans" font-size="10.4" text-anchor="middle" textLength="17.8" lengthAdjust="spacingAndGlyphs" fill="#111">9.00</text><text x="883.3" y="642.4" font-family="Liberation Sans" font-size="10.4" text-anchor="middle" textLength="22.1" lengthAdjust="spacingAndGlyphs" fill="#111">10.00</text><text x="958.3" y="642.4" font-family="Liberation Sans" font-size="10.4" text-anchor="middle" textLength="22.1" lengthAdjust="spacingAndGlyphs" fill="#111">11.00</text><text x="1033.3" y="642.4" font-family="Liberation Sans" font-size="10.4" text-anchor="middle" textLength="22.1" lengthAdjust="spacingAndGlyphs" fill="#111">12.00</text><text x="1108.3" y="642.4" font-family="Liberation Sans" font-size="10.4" text-anchor="middle" textLength="22.1" lengthAdjust="spacingAndGlyphs" fill="#111">13.00</text><text x="1183.3" y="642.4" font-family="Liberation Sans" font-size="10.4" text-anchor="middle" textLength="22.1" lengthAdjust="spacingAndGlyphs" fill="#111">14.00</text><text x="70.2" y="592.4" font-family="Liberation Sans" font-size="10.4" textLength="17.8" lengthAdjust="spacingAndGlyphs" fill="#111">0.00</text><text x="70.2" y="517.4" font-family="Liberation Sans" font-size="10.4" textLength="17.8" lengthAdjust="spacingAndGlyphs" fill="#111">1.00</text><text x="70.2" y="442.4" font-family="Liberation Sans" font-size="10.4" textLength="17.8" lengthAdjust="spacingAndGlyphs" fill="#111">2.00</text><text x="70.2" y="367.4" font-family="Liberation Sans" font-size="10.4" textLength="17.8" lengthAdjust="spacingAndGlyphs" fill="#111">3.00</text><circle cx="133.3" cy="363.4" r="3.8" fill="none" stroke="#7a7a7a" stroke-width="1"/><circle cx="658" cy="363.2" r="3.8" fill="none" stroke="#7a7a7a" stroke-width="1"/><circle cx="1183" cy="363.4" r="3.8" fill="none" stroke="#7a7a7a" stroke-width="1"/><circle cx="133.3" cy="476" r="3.8" fill="none" stroke="#7a7a7a" stroke-width="1"/><circle cx="1183" cy="476" r="3.8" fill="none" stroke="#7a7a7a" stroke-width="1"/><circle cx="133.3" cy="588.5" r="3.8" fill="none" stroke="#7a7a7a" stroke-width="1"/><circle cx="658" cy="588.5" r="3.8" fill="none" stroke="#7a7a7a" stroke-width="1"/><circle cx="1183" cy="588.5" r="3.8" fill="none" stroke="#7a7a7a" stroke-width="1"/><circle cx="658" cy="459.8" r="3.8" fill="none" stroke="#7a7a7a" stroke-width="1"/><circle cx="658" cy="476" r="3.9" fill="none" stroke="#f07023" stroke-width="1.2"/><text x="139.5" y="380.5" font-family="Liberation Sans" font-size="18.5" fill="#6e6e6e" text-anchor="middle">4</text><text x="658.5" y="380" font-family="Liberation Sans" font-size="18.5" fill="#6e6e6e" text-anchor="middle">7</text><text x="1178" y="380.5" font-family="Liberation Sans" font-size="18.5" fill="#6e6e6e" text-anchor="middle">3</text><text x="139" y="482.1" font-family="Liberation Sans" font-size="18.5" fill="#6e6e6e" text-anchor="middle">8</text><text x="1177" y="482.1" font-family="Liberation Sans" font-size="18.5" fill="#6e6e6e" text-anchor="middle">6</text><text x="138.5" y="583.1" font-family="Liberation Sans" font-size="18.5" fill="#6e6e6e" text-anchor="middle">1</text><text x="658.5" y="582.8" font-family="Liberation Sans" font-size="18.5" fill="#6e6e6e" text-anchor="middle">5</text><text x="1177.5" y="583.6" font-family="Liberation Sans" font-size="18.5" fill="#6e6e6e" text-anchor="middle">2</text><text x="658.5" y="454.5" font-family="Liberation Sans" font-size="18.5" fill="#6e6e6e" text-anchor="middle">0</text><text x="658.5" y="493.5" font-family="Liberation Sans" font-size="18.5" fill="#f07023" text-anchor="middle">9</text><line x1="491" y1="601.8" x2="557" y2="601.8" stroke="#000a78" stroke-width="3.8" stroke-linecap="round"/><path d="M523.9 602.5 L550.6 638.3 H497.2 Z" fill="none" stroke="#000a78" stroke-width="1.9" stroke-linejoin="miter"/><line x1="761" y1="601.8" x2="827" y2="601.8" stroke="#000a78" stroke-width="3.8" stroke-linecap="round"/><path d="M793.9 602.5 L820.6 638.3 H767.2 Z" fill="none" stroke="#000a78" stroke-width="1.9" stroke-linejoin="miter"/><line x1="767.2" y1="646.2" x2="820.6" y2="646.2" stroke="#000a78" stroke-width="1.9"/></svg>
<svg class="a" style="left:1271px;top:294px" width="7" height="7"><path d="M6 0.5 V6.5 H0 Z" fill="#444"/></svg>
<div class="tr" style="left:1290px;top:290px">DRM1</div>
<svg class="a" style="left:1291px;top:314px" width="7" height="9"><path d="M0.5 0.5 L6 4.2 L0.5 8 Z" fill="#444"/></svg>
<div class="tr" style="left:1310px;top:312px">Members</div>
<svg class="a" style="left:1291px;top:336px" width="7" height="9"><path d="M0.5 0.5 L6 4.2 L0.5 8 Z" fill="#444"/></svg>
<div class="tr" style="left:1310px;top:334px">Supports</div>
<svg class="a" style="left:1291px;top:358px" width="7" height="9"><path d="M0.5 0.5 L6 4.2 L0.5 8 Z" fill="#444"/></svg>
<div class="tr" style="left:1310px;top:356px">Loads and Combin...</div>
<svg class="a" style="left:1291px;top:381px" width="7" height="7"><path d="M6 0.5 V6.5 H0 Z" fill="#444"/></svg>
<div class="tr" style="left:1310px;top:378px">Reinforcements</div>
<svg class="a" style="left:1311px;top:403px" width="7" height="7"><path d="M6 0.5 V6.5 H0 Z" fill="#444"/></svg>
<div class="tr" style="left:1330px;top:400px">Group of Bars</div>
<div class="a" style="left:1330px;top:424px;width:11px;height:11px;background:#e3e3e3;border-radius:2px"></div><svg class="a" style="left:1330px;top:422px" width="15" height="15"><path d="M3 7 L6.3 10.8 L13.3 1.2" fill="none" stroke="#f7931e" stroke-width="2.1"/></svg>
<div class="gb" style="left:1352px;top:423.5px">GB2</div>
<div class="a" style="left:1330px;top:446px;width:11px;height:11px;background:#e3e3e3;border-radius:2px"></div><svg class="a" style="left:1330px;top:444px" width="15" height="15"><path d="M3 7 L6.3 10.8 L13.3 1.2" fill="none" stroke="#f7931e" stroke-width="2.1"/></svg>
<div class="gb" style="left:1352px;top:445.5px">GB5</div>
<div class="a" style="left:1330px;top:468px;width:11px;height:11px;background:#e3e3e3;border-radius:2px"></div><svg class="a" style="left:1330px;top:466px" width="15" height="15"><path d="M3 7 L6.3 10.8 L13.3 1.2" fill="none" stroke="#f7931e" stroke-width="2.1"/></svg>
<div class="gb" style="left:1352px;top:467.5px">GB6</div>
<div class="a" style="left:1330px;top:490px;width:11px;height:11px;background:#e3e3e3;border-radius:2px"></div><svg class="a" style="left:1330px;top:488px" width="15" height="15"><path d="M3 7 L6.3 10.8 L13.3 1.2" fill="none" stroke="#f7931e" stroke-width="2.1"/></svg>
<div class="gb" style="left:1352px;top:489.5px">GB7</div>
<div class="a" style="left:1330px;top:512px;width:11px;height:11px;background:#e3e3e3;border-radius:2px"></div><svg class="a" style="left:1330px;top:510px" width="15" height="15"><path d="M3 7 L6.3 10.8 L13.3 1.2" fill="none" stroke="#f7931e" stroke-width="2.1"/></svg>
<div class="gb" style="left:1352px;top:511.5px">GB8</div>
<div class="a" style="left:1330px;top:534px;width:11px;height:11px;background:#e3e3e3;border-radius:2px"></div><svg class="a" style="left:1330px;top:532px" width="15" height="15"><path d="M3 7 L6.3 10.8 L13.3 1.2" fill="none" stroke="#f7931e" stroke-width="2.1"/></svg>
<div class="gb" style="left:1352px;top:533.5px">GB1</div>
<div class="a" style="left:1330px;top:556px;width:11px;height:11px;background:#e3e3e3;border-radius:2px"></div><svg class="a" style="left:1330px;top:554px" width="15" height="15"><path d="M3 7 L6.3 10.8 L13.3 1.2" fill="none" stroke="#f7931e" stroke-width="2.1"/></svg>
<div class="gb" style="left:1352px;top:555.5px">GB3</div>
<div class="a" style="left:1330px;top:578px;width:11px;height:11px;background:#e3e3e3;border-radius:2px"></div><svg class="a" style="left:1330px;top:576px" width="15" height="15"><path d="M3 7 L6.3 10.8 L13.3 1.2" fill="none" stroke="#f7931e" stroke-width="2.1"/></svg>
<div class="gb" style="left:1352px;top:577.5px">GB4</div>
<svg class="a" style="left:1311px;top:598px" width="7" height="7"><path d="M6 0.5 V6.5 H0 Z" fill="#444"/></svg>
<div class="tr" style="left:1330px;top:598px">Wire Fabrics</div>
<svg class="a" style="left:1323px;top:615px" width="104" height="23"><path d="M0.9 0.8 H88.8 L102.5 11.4 L88.8 22 H0.9 Z" fill="#f07023"/></svg>
<div class="a" style="left:1330px;top:622px;width:11px;height:11px;background:#eaeaea;border-radius:2px"></div><svg class="a" style="left:1330px;top:620px" width="15" height="15"><path d="M3 7 L6.3 10.8 L13.3 1.2" fill="none" stroke="#f7931e" stroke-width="2.1"/></svg>
<div class="gb" style="left:1352px;top:621px;color:#fff;margin-left:0;letter-spacing:-0.3px">WF1</div>
<svg class="a" style="left:1311px;top:645px" width="7" height="7"><path d="M6 0.5 V6.5 H0 Z" fill="#444"/></svg>
<div class="tr" style="left:1330px;top:642px">Cages</div>
<div class="a" style="left:1330px;top:666px;width:11px;height:11px;background:#e3e3e3;border-radius:2px"></div><svg class="a" style="left:1330px;top:664px" width="15" height="15"><path d="M3 7 L6.3 10.8 L13.3 1.2" fill="none" stroke="#f7931e" stroke-width="2.1"/></svg>
<div class="gb" style="left:1352px;top:665px">RO1</div>
<div class="a" style="left:1445px;top:158px;width:6px;height:533px;background:#c9c9c9"></div>
<div class="a" style="left:1451px;top:158px;width:468px;height:25px;background:#f07023"></div>
<div class="t" style="left:1461px;top:165px;font-weight:bold;color:#fff;font-size:12.5px">WF1</div>
<div class="t" style="left:1770px;top:165px;font-weight:bold;color:#fff;font-size:12.5px">New</div>
<div class="t" style="left:1816px;top:165px;font-weight:bold;color:#fff;font-size:12.5px;letter-spacing:-0.8px">Copy</div>
<div class="t" style="left:1863px;top:165px;font-weight:bold;color:#fff;font-size:12.5px">Delete</div>
<svg class="a" style="left:1475px;top:206px" width="11" height="7"><path d="M1 1 L5.3 5.3 L9.6 1" fill="none" stroke="#f07023" stroke-width="1.3"/></svg>
<div class="t" style="left:1493px;top:203px;font-weight:bold;color:#3a3a3a">Wire fabric</div>
<div class="lbl" style="top:227.5px">Diameters [mm]</div>
<div class="inp" style="top:223px;width:290px">14 14</div>
<div class="lbl" style="top:251.5px">Distances [mm]</div>
<div class="inp" style="top:247px;width:290px">150 150</div>
<div class="lbl" style="top:275.5px">Material</div>
<div class="inp" style="top:271px;width:269px">B 500B</div>
<div class="lbl" style="top:299.5px">Number of fabrics</div>
<div class="inp" style="top:295px;width:290px">5</div>
<div class="a" style="left:1879px;top:271px;width:21.5px;height:19.5px;background:#9a9a9a"></div>
<div class="a" style="left:1882px;top:279px;width:16px;height:4px;background:#fff"></div>
<div class="a" style="left:1888px;top:274px;width:4px;height:14px;background:#fff"></div>
<svg class="a" style="left:1863.5px;top:278px" width="11" height="7"><path d="M1 1 L5.3 5 L9.6 1" fill="none" stroke="#333" stroke-width="1.2"/></svg>
<svg class="a" style="left:1475px;top:338px" width="11" height="7"><path d="M1 1 L5.3 5.3 L9.6 1" fill="none" stroke="#f07023" stroke-width="1.3"/></svg>
<div class="t" style="left:1493px;top:335px;font-weight:bold;color:#3a3a3a">Position</div>
<div class="lbl" style="top:359.5px">MP - Master point</div>
<div class="inp" style="top:355px">9</div>
<div class="lbl" style="top:383.5px">Position [mm]</div>
<div class="inp" style="top:379px">0 0</div>
<div class="lbl" style="top:407.5px">Angle [&#176;]</div>
<div class="inp" style="top:403px">0.0</div>
<div class="lbl" style="top:431.5px">Concrete cover type</div>
<div class="inp" style="top:427px">From Settings</div>
<svg class="a" style="left:1885px;top:362px" width="11" height="7"><path d="M1 1 L5.3 5 L9.6 1" fill="none" stroke="#333" stroke-width="1.2"/></svg>
<svg class="a" style="left:1885px;top:434px" width="11" height="7"><path d="M1 1 L5.3 5 L9.6 1" fill="none" stroke="#333" stroke-width="1.2"/></svg>
<div class="a" style="left:1316px;top:607.2px;width:114px;height:40px;border:4.2px solid #f00;border-radius:9px"></div>
<div class="a" style="left:1855px;top:153.5px;width:59.5px;height:37px;border:4px solid #f00;border-radius:8px"></div>
</body></html>
